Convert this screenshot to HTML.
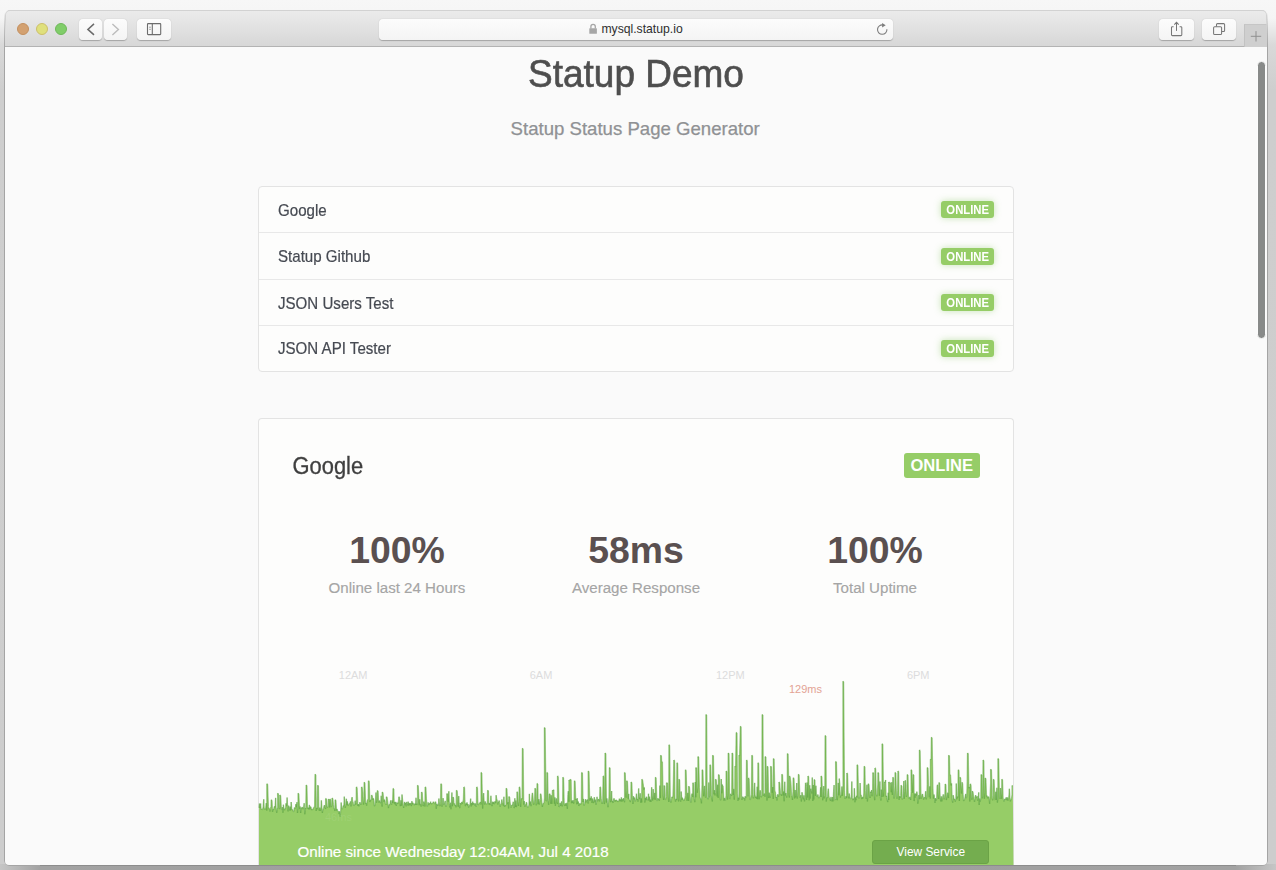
<!DOCTYPE html>
<html><head><meta charset="utf-8">
<style>
*{margin:0;padding:0;box-sizing:border-box}
html,body{width:1276px;height:870px;overflow:hidden}
body{position:relative;font-family:"Liberation Sans",sans-serif;background:#f4f4f4}
.t{position:absolute;white-space:nowrap;line-height:1}
#shadow{position:absolute;left:5px;top:10px;width:1262px;height:855px;border-radius:6px;box-shadow:0 6px 18px rgba(0,0,0,0.45),0 0 1px rgba(0,0,0,0.4)}
#win{position:absolute;left:5px;top:10px;width:1262px;height:855px;border-radius:5px 5px 4px 4px;overflow:hidden;background:#fafafa}
#toolbar{position:absolute;left:0;top:0;width:1262px;height:37px;background:linear-gradient(#ebebeb,#d7d7d7);border-bottom:1px solid #b3b3b3;border-top:1px solid transparent}
.btn{position:absolute;top:8px;height:21px;background:linear-gradient(#fcfcfc,#f4f4f4);border-radius:4px;box-shadow:0 0.5px 1px rgba(0,0,0,0.25)}
.light{position:absolute;top:12px;width:12px;height:12px;border-radius:50%}
#list{position:absolute;left:258px;top:186px;width:756px;height:186px;border:1px solid #e3e3e3;border-radius:4px;background:#fdfdfc}
.row{position:absolute;left:0;width:754px;height:46px;border-top:1px solid #e8e8e8}
.name{position:absolute;left:19px;font-size:15.1px;color:#464a52;-webkit-text-stroke:0.2px #464a52;white-space:nowrap;line-height:1;transform:scaleY(1.1);transform-origin:0 12.8px}
.sb{position:absolute;left:682.2px;width:53px;height:17px;border-radius:3px;background:#96cd67;box-shadow:0 0 7px rgba(120,190,80,0.4);color:#fff;font-weight:bold;font-size:11.3px;line-height:18px;text-align:center}
.sb span{display:inline-block;transform:scaleY(1.1);transform-origin:50% 70%}
#card{position:absolute;left:258px;top:418px;width:756px;height:447px;border:1px solid #e3e3e3;border-bottom:none;border-radius:4px 4px 0 0;background:#fdfdfc;overflow:hidden}
.big{position:absolute;font-weight:bold;font-size:37.4px;color:#5a5050;white-space:nowrap;line-height:1;text-align:center;width:240px}
.lbl{position:absolute;font-size:15.1px;color:#a5a5a5;-webkit-text-stroke:0.15px #a5a5a5;white-space:nowrap;line-height:1;text-align:center;width:240px}
.ax{position:absolute;font-size:11px;color:#dcdcdc;white-space:nowrap;line-height:1}
</style></head><body>
<div style="position:absolute;left:0;top:0;width:1276px;height:870px;background:linear-gradient(#f7f7f7 0px,#f5f5f5 18px,#d9d9d9 45px,#cecece 90px,#cdcdcd 870px)"></div>
<div style="position:absolute;left:0;top:864px;width:1276px;height:6px;background:linear-gradient(90deg,#c6c6c6 0px,#a2a2a2 40px,#9c9c9c 640px,#a2a2a2 1236px,#c6c6c6 1276px)"></div>
<div style="position:absolute;left:4px;top:10px;width:1264px;height:856px;border-radius:6px;background:linear-gradient(rgba(164,164,164,0) 0px,rgba(164,164,164,0.6) 20px,#a4a4a4 40px)"></div>
<div id="win">
  <div id="toolbar">
    <div class="light" style="left:12px;background:#d3a171;border:0.5px solid #c4905f"></div>
    <div class="light" style="left:31px;background:#dfe07c;border:0.5px solid #cdbf6a"></div>
    <div class="light" style="left:50px;background:#80cd69;border:0.5px solid #6fb85a"></div>
    <div class="btn" style="left:74px;width:23px"></div>
    <div class="btn" style="left:99px;width:23px"></div>
    <div class="btn" style="left:132px;width:34px"></div>
    <div class="btn" style="left:373.5px;width:514.5px;"></div>
    <div class="btn" style="left:1154px;width:35px"></div>
    <div class="btn" style="left:1196.5px;width:34.5px"></div>
    <div style="position:absolute;left:1239px;top:13.3px;width:23px;height:22.7px;background:#cfcfcf;border-left:1px solid #c2c2c2;border-top:1px solid #c6c6c6"></div>
  </div>
</div>
<svg style="position:absolute;left:0;top:0" width="1276" height="60" viewBox="0 0 1276 60">
  <path d="M94,23.9 L87.9,29.4 L94,34.9" fill="none" stroke="#6a6a6a" stroke-width="1.5"/>
  <path d="M112.4,23.9 L118.4,29.4 L112.4,34.9" fill="none" stroke="#bcbcbc" stroke-width="1.4"/>
  <rect x="147.5" y="23.6" width="13.2" height="11" fill="none" stroke="#6c6c6c" stroke-width="1.1" rx="0.6"/>
  <line x1="152.3" y1="23.6" x2="152.3" y2="34.6" stroke="#6c6c6c" stroke-width="1.1"/>
  <line x1="149.2" y1="27.2" x2="150.8" y2="27.2" stroke="#8a8a8a" stroke-width="0.9"/>
  <line x1="149.2" y1="29.3" x2="150.8" y2="29.3" stroke="#8a8a8a" stroke-width="0.9"/>
  <rect x="589.3" y="28.2" width="7.6" height="5.6" rx="0.6" fill="#a6a6a6"/>
  <path d="M590.9,28.4 V26.6 A2.2,2.2 0 0 1 595.3,26.6 V28.4" fill="none" stroke="#a6a6a6" stroke-width="1.3"/>
  <path d="M886.9,29.2 A4.7,4.7 0 1 1 883.1,25" fill="none" stroke="#7c7c7c" stroke-width="1.1"/>
  <path d="M882.1,22.9 L885.7,25.2 L882.1,27.5 Z" fill="#7c7c7c"/>
  <path d="M1173.6,26.7 H1172.4 Q1171.5,26.7 1171.5,27.6 V34.7 Q1171.5,35.6 1172.4,35.6 H1180.9 Q1181.8,35.6 1181.8,34.7 V27.6 Q1181.8,26.7 1180.9,26.7 H1179.6" fill="none" stroke="#767676" stroke-width="1.05"/>
  <line x1="1176.5" y1="22.4" x2="1176.5" y2="30.9" stroke="#767676" stroke-width="1.05"/>
  <path d="M1174.3,24.6 L1176.5,22.3 L1178.7,24.6" fill="none" stroke="#767676" stroke-width="1.05"/>
  <rect x="1213.6" y="26.7" width="8" height="7.8" rx="1.1" fill="none" stroke="#767676" stroke-width="1.05"/>
  <path d="M1216.5,26.5 V24.6 Q1216.5,23.6 1217.5,23.6 H1223.6 Q1224.6,23.6 1224.6,24.6 V30.5 Q1224.6,31.5 1223.6,31.5 H1221.9" fill="none" stroke="#767676" stroke-width="1.05"/>
  <line x1="1250.8" y1="36.3" x2="1261.2" y2="36.3" stroke="#8f8f8f" stroke-width="1"/>
  <line x1="1256" y1="31.1" x2="1256" y2="41.5" stroke="#8f8f8f" stroke-width="1"/>
</svg>
<div class="t" style="left:601.4px;top:23px;font-size:12.2px;color:#2e2e2e">mysql.statup.io</div>
<div style="position:absolute;left:1257.2px;top:61.2px;width:8.6px;height:277.6px;border-radius:4.3px;background:#888a89;border:1px solid #fcfcfc"></div>
<div style="position:absolute;left:5px;top:10px;width:1262px;height:24px;border:1px solid #d2d2d2;border-bottom:none;border-radius:5px 5px 0 0;-webkit-mask-image:linear-gradient(#000 40%,transparent)"></div>
<div style="position:absolute;left:40px;top:865px;width:1196px;height:1px;background:#8c8c8c;z-index:0"></div>
<!-- page content in absolute page coords -->
<div class="t" style="left:528px;top:55.6px;font-size:37px;color:#4e4e4e;transform:scaleY(1.06);transform-origin:0 31.3px;-webkit-text-stroke:0.6px #4e4e4e">Statup Demo</div>
<div class="t" style="left:510.6px;top:120.1px;font-size:18.6px;color:#8f9194;-webkit-text-stroke:0.25px #8f9194">Statup Status Page Generator</div>

<div id="list">
  <div class="row" style="top:0;border-top:none"><div class="name" style="top:15.5px">Google</div><div class="sb" style="top:14px"><span>ONLINE</span></div></div>
  <div class="row" style="top:45px"><div class="name" style="top:16px">Statup Github</div><div class="sb" style="top:14.6px"><span>ONLINE</span></div></div>
  <div class="row" style="top:92px"><div class="name" style="top:15.5px">JSON Users Test</div><div class="sb" style="top:14px"><span>ONLINE</span></div></div>
  <div class="row" style="top:138px"><div class="name" style="top:15px">JSON API Tester</div><div class="sb" style="top:14px"><span>ONLINE</span></div></div>
</div>

<div id="card"></div>
<div class="t" style="left:292.5px;top:455.5px;font-size:21.9px;color:#3f3f3f;-webkit-text-stroke:0.3px #3f3f3f;transform:scaleY(1.07);transform-origin:0 18.5px">Google</div>
<div class="abs" style="position:absolute;left:903.6px;top:452.7px;width:76.4px;height:25.2px;border-radius:3px;background:#96cd67;color:#fff;font-weight:bold;font-size:16.6px;line-height:25.2px;text-align:center">ONLINE</div>

<div class="big" style="left:277px;top:532.3px">100%</div>
<div class="big" style="left:516px;top:532.3px">58ms</div>
<div class="big" style="left:755px;top:532.3px">100%</div>
<div class="lbl" style="left:277px;top:579.7px">Online last 24 Hours</div>
<div class="lbl" style="left:516px;top:579.7px">Average Response</div>
<div class="lbl" style="left:755px;top:579.7px">Total Uptime</div>

<div class="ax" style="left:338.8px;top:669.9px">12AM</div>
<div class="ax" style="left:529.7px;top:669.9px">6AM</div>
<div class="ax" style="left:716px;top:669.9px">12PM</div>
<div class="ax" style="left:906.9px;top:669.9px">6PM</div>
<div class="ax" style="left:789px;top:683.6px;color:#e3a394">129ms</div>

<svg style="position:absolute;left:0;top:0" width="1276" height="865" viewBox="0 0 1276 865">
  <path d="M259.0,807.9 L259.5,803.5 L260.0,808.0 L260.6,803.5 L261.1,809.4 L261.6,808.9 L262.1,809.7 L262.6,809.6 L263.2,806.5 L263.7,799.3 L264.2,808.2 L264.7,809.7 L265.2,809.1 L265.8,807.2 L266.3,803.1 L266.8,810.6 L266.8,783.7 L267.6,784.2 L268.4,806.6 L268.9,809.1 L269.4,808.6 L269.9,811.5 L270.4,808.3 L271.0,806.6 L271.2,799.7 L272.0,800.2 L272.5,811.8 L273.0,809.3 L273.6,809.9 L274.1,807.1 L274.6,806.3 L275.1,807.3 L275.6,797.9 L276.2,809.1 L276.7,812.8 L277.2,808.3 L277.7,808.3 L277.6,793.3 L278.4,793.8 L279.3,809.0 L279.8,808.5 L279.8,795.1 L280.6,795.6 L281.4,809.4 L281.9,809.7 L282.4,807.1 L282.9,812.8 L283.4,804.7 L284.0,808.7 L284.5,810.2 L285.0,808.5 L285.5,808.7 L286.0,803.3 L286.6,806.2 L287.1,797.5 L287.6,806.2 L288.1,811.4 L288.6,805.6 L289.2,807.7 L289.7,810.5 L290.2,806.6 L290.7,810.3 L291.2,802.0 L291.8,809.8 L292.3,809.5 L292.8,809.9 L293.3,811.7 L293.8,811.6 L294.4,807.5 L294.9,808.6 L295.4,808.1 L295.9,804.1 L296.4,807.2 L297.0,802.1 L297.5,813.0 L298.0,807.9 L298.0,793.3 L298.8,793.8 L299.6,808.9 L300.1,806.5 L300.6,813.0 L301.1,808.1 L301.6,808.4 L302.2,806.9 L302.7,809.1 L303.2,808.6 L303.7,806.5 L304.2,803.2 L304.8,814.3 L305.3,808.1 L305.8,808.8 L306.1,785.0 L306.9,785.5 L307.4,806.0 L307.9,808.9 L308.4,807.7 L308.9,809.4 L309.4,804.9 L310.0,809.2 L310.5,806.7 L311.0,806.8 L311.5,810.1 L312.0,809.3 L312.6,809.7 L313.1,809.1 L313.6,807.5 L314.1,807.5 L314.6,806.9 L315.0,774.2 L315.8,774.7 L316.2,811.0 L316.7,807.8 L317.2,809.2 L317.6,785.2 L318.4,785.7 L318.8,807.9 L319.3,810.6 L319.8,807.6 L320.4,810.8 L320.9,807.5 L321.4,800.4 L321.9,808.3 L322.4,813.0 L323.0,808.9 L323.5,808.4 L324.0,806.0 L324.5,805.1 L325.0,807.5 L325.6,808.9 L325.6,798.4 L326.4,798.9 L327.1,807.4 L327.6,806.8 L328.2,807.2 L328.4,799.0 L329.2,799.5 L329.7,807.5 L329.8,799.0 L330.6,799.5 L331.3,807.0 L331.8,806.3 L332.0,798.0 L332.8,798.5 L333.4,804.4 L333.9,808.8 L334.4,808.6 L334.9,811.0 L335.1,799.7 L335.9,800.2 L336.5,810.5 L337.0,808.9 L337.5,811.1 L338.0,811.4 L338.6,811.3 L339.1,813.9 L339.6,811.3 L340.1,816.5 L340.6,812.2 L341.2,802.5 L341.7,809.1 L342.2,808.9 L342.7,808.2 L343.2,805.6 L343.8,806.2 L344.3,796.6 L344.8,802.4 L345.3,807.9 L345.8,805.3 L346.4,798.7 L346.9,805.2 L347.4,801.3 L347.9,805.3 L348.4,804.8 L349.0,804.9 L349.5,803.2 L350.0,803.4 L350.5,801.4 L351.0,806.4 L351.6,799.1 L352.1,797.2 L352.6,801.2 L353.1,802.2 L353.6,805.9 L354.2,805.2 L354.7,803.7 L355.2,800.6 L355.7,804.6 L356.2,802.3 L356.3,786.9 L357.1,787.4 L357.8,805.9 L358.3,804.1 L358.8,806.3 L359.4,804.8 L359.9,802.2 L360.4,804.2 L360.9,803.9 L361.4,804.6 L361.5,786.9 L362.2,787.4 L363.0,796.5 L363.5,804.6 L364.0,801.0 L364.1,782.2 L364.9,782.7 L365.6,803.8 L366.1,802.9 L366.6,805.6 L367.2,800.6 L367.7,799.6 L368.2,799.6 L368.4,780.7 L369.2,781.2 L369.8,802.1 L370.3,800.0 L370.8,800.0 L371.3,800.0 L371.5,795.1 L372.2,795.6 L372.9,800.0 L373.4,798.3 L373.9,801.1 L374.4,806.2 L375.0,805.4 L375.5,800.3 L376.0,792.5 L376.5,802.7 L377.0,800.0 L377.3,790.5 L378.1,791.0 L378.6,802.5 L379.1,801.2 L379.6,800.5 L380.2,802.8 L380.7,803.1 L381.2,795.7 L381.7,802.7 L382.2,806.6 L382.2,792.0 L383.0,792.5 L383.8,801.6 L384.3,799.6 L384.8,800.3 L385.4,803.4 L385.9,804.8 L386.4,803.1 L386.3,796.7 L387.1,797.2 L388.0,804.2 L388.5,808.2 L389.0,804.6 L389.5,805.0 L390.0,804.0 L390.6,800.4 L391.1,803.4 L391.6,804.7 L392.1,800.4 L392.6,803.0 L393.0,788.4 L393.8,788.9 L394.2,803.5 L394.7,801.9 L395.2,804.5 L395.8,801.8 L396.3,806.0 L396.8,802.9 L397.3,802.8 L397.8,803.7 L398.4,801.8 L398.8,796.7 L399.5,797.2 L399.9,802.9 L400.4,806.1 L401.0,800.2 L401.5,805.7 L402.0,794.5 L402.5,799.3 L403.0,804.2 L403.6,808.0 L404.1,804.6 L404.6,801.9 L405.1,804.6 L405.6,802.8 L406.2,806.4 L406.7,801.9 L407.2,803.9 L407.7,805.3 L408.2,801.6 L408.8,805.6 L409.3,803.0 L409.8,804.8 L410.3,804.2 L410.8,802.9 L411.4,806.1 L411.9,801.1 L412.4,804.3 L412.9,802.7 L413.4,803.8 L414.0,805.0 L414.5,805.1 L415.0,803.5 L415.5,804.9 L416.0,797.8 L416.6,805.0 L417.1,803.7 L417.6,803.2 L417.5,785.3 L418.2,785.8 L419.2,805.2 L419.7,799.2 L420.2,804.2 L420.7,804.0 L421.2,806.6 L421.5,792.0 L422.2,792.5 L422.8,804.0 L423.3,806.1 L423.8,801.6 L424.4,803.2 L424.9,806.5 L425.1,786.9 L425.9,787.4 L426.4,799.0 L427.0,806.3 L427.5,806.5 L428.0,802.4 L428.5,803.4 L429.0,805.0 L429.6,803.1 L430.1,803.7 L430.6,801.7 L431.1,804.2 L431.6,803.4 L432.2,803.9 L432.7,802.7 L433.2,801.9 L433.7,801.8 L434.2,803.3 L434.8,804.0 L435.3,801.8 L435.8,801.8 L436.3,808.8 L436.8,803.8 L437.4,805.7 L437.9,804.8 L438.4,805.2 L438.9,798.5 L439.4,804.0 L440.0,806.2 L440.5,800.9 L440.8,783.8 L441.6,784.3 L442.0,806.7 L442.6,804.1 L443.1,798.1 L443.6,804.7 L444.1,804.6 L444.6,803.1 L445.2,800.8 L445.7,806.8 L446.2,805.9 L446.7,804.3 L446.8,793.6 L447.6,794.1 L448.3,801.8 L448.8,791.3 L449.3,803.3 L449.8,807.3 L450.4,802.7 L450.9,809.2 L451.4,803.1 L451.9,792.5 L452.4,806.3 L453.0,797.0 L453.5,797.8 L454.0,804.4 L454.5,803.5 L455.0,805.9 L455.6,805.2 L456.1,807.3 L456.4,790.3 L457.2,790.8 L457.6,796.3 L458.2,806.6 L458.7,796.1 L459.2,804.3 L459.7,808.2 L460.2,802.9 L460.8,804.4 L461.3,804.0 L461.8,801.9 L462.3,804.0 L462.8,801.7 L463.4,800.1 L463.8,786.9 L464.5,787.4 L464.9,800.9 L465.4,806.2 L466.0,803.5 L466.5,804.8 L467.0,802.4 L467.5,805.5 L468.0,804.0 L468.6,807.7 L469.1,805.6 L469.6,805.1 L470.1,804.1 L470.6,798.6 L471.2,806.5 L471.7,803.0 L472.2,805.2 L472.7,801.6 L473.2,804.5 L473.8,803.1 L474.3,803.9 L474.8,805.7 L475.3,803.4 L475.8,806.6 L476.4,805.5 L476.6,786.9 L477.4,787.4 L477.9,804.9 L478.4,804.5 L479.0,803.9 L479.5,802.9 L480.0,802.7 L480.5,801.9 L481.0,804.5 L481.0,772.4 L481.8,772.9 L482.6,808.6 L483.1,797.7 L483.6,793.1 L484.2,802.0 L484.7,804.5 L485.2,801.4 L485.7,803.7 L486.2,803.8 L486.8,804.3 L487.3,803.0 L487.6,790.3 L488.4,790.8 L488.8,804.5 L489.4,803.0 L489.9,805.0 L490.4,803.2 L490.9,795.7 L491.4,803.1 L492.0,806.1 L492.5,801.7 L493.0,803.9 L493.5,801.9 L494.0,804.2 L494.6,802.2 L495.1,801.3 L495.6,803.2 L496.1,795.2 L496.6,798.7 L497.2,800.0 L497.7,804.5 L498.2,802.1 L498.7,802.1 L499.2,800.5 L499.8,805.0 L500.3,806.7 L500.8,804.0 L501.3,803.8 L501.8,799.5 L502.4,802.4 L502.9,803.7 L503.4,805.6 L503.9,796.8 L504.4,806.8 L505.0,805.3 L505.5,806.1 L506.0,804.4 L506.1,788.3 L506.9,788.8 L507.6,804.1 L508.1,802.1 L508.6,808.4 L508.8,796.6 L509.6,797.1 L510.2,803.1 L510.7,806.2 L511.2,807.6 L511.7,805.2 L512.2,805.6 L512.8,803.3 L513.3,801.8 L513.8,806.4 L514.3,808.1 L514.8,798.2 L515.4,807.0 L515.9,800.5 L516.4,807.1 L516.9,804.3 L516.9,791.7 L517.6,792.2 L518.5,806.0 L519.0,801.6 L519.2,786.9 L520.0,787.4 L520.6,806.9 L521.1,799.3 L521.6,798.4 L522.1,799.3 L522.4,748.3 L523.1,748.8 L523.7,804.6 L524.2,801.0 L524.7,806.8 L525.2,805.2 L525.8,804.8 L526.3,802.2 L526.8,802.7 L527.3,807.1 L527.8,807.5 L528.4,806.2 L528.9,805.4 L529.4,793.9 L529.9,804.5 L530.4,801.5 L531.0,806.2 L531.5,803.3 L532.0,794.5 L532.5,792.9 L533.0,797.0 L533.6,804.7 L534.1,803.0 L534.6,800.2 L534.9,788.3 L535.6,788.8 L536.2,805.3 L536.7,803.4 L537.0,783.4 L537.8,783.9 L538.2,804.3 L538.8,799.1 L539.3,804.5 L539.8,802.0 L540.3,799.3 L540.4,793.8 L541.1,794.3 L541.9,803.2 L542.4,806.8 L542.9,803.8 L543.4,803.2 L544.0,803.3 L544.5,798.0 L544.4,727.6 L545.1,728.1 L546.0,801.1 L546.6,800.9 L546.9,772.4 L547.6,772.9 L548.1,800.1 L548.6,804.9 L549.2,794.0 L549.5,793.8 L550.2,794.3 L550.7,803.7 L551.2,795.3 L551.8,803.9 L552.3,794.5 L552.4,790.3 L553.1,790.8 L553.8,789.7 L554.4,803.6 L554.9,797.4 L555.4,805.9 L555.9,800.1 L556.4,798.4 L557.0,802.1 L557.5,804.1 L557.5,775.9 L558.2,776.4 L559.0,807.1 L559.6,806.2 L560.1,802.9 L560.6,805.8 L561.1,803.9 L561.6,801.4 L562.2,806.3 L562.7,804.0 L562.8,777.2 L563.5,777.7 L564.2,803.3 L564.8,806.0 L565.3,803.3 L565.8,804.3 L566.3,805.7 L566.8,802.8 L567.4,808.7 L567.9,794.2 L568.4,791.2 L568.9,801.8 L568.9,780.0 L569.6,780.5 L570.4,779.3 L571.1,779.8 L571.5,803.2 L572.0,800.7 L572.6,802.9 L573.1,800.2 L573.6,803.6 L574.1,801.6 L574.4,780.7 L575.1,781.2 L575.7,800.0 L576.2,799.1 L576.7,804.2 L577.2,798.1 L577.8,803.8 L578.3,801.5 L578.8,806.0 L579.3,803.6 L579.8,804.0 L580.4,803.7 L580.9,804.3 L581.4,802.4 L581.6,772.4 L582.4,772.9 L583.0,802.0 L583.5,798.9 L584.0,805.5 L584.5,804.6 L585.0,802.8 L585.6,799.1 L586.1,802.3 L586.6,800.4 L587.1,800.8 L587.6,799.5 L588.2,803.5 L588.2,771.0 L589.0,771.5 L589.7,800.7 L590.2,797.8 L590.8,800.2 L591.3,796.3 L591.8,802.8 L592.3,798.5 L592.8,799.7 L593.4,803.1 L593.9,799.5 L594.4,797.2 L594.9,802.3 L595.4,799.6 L596.0,804.6 L596.5,802.5 L597.0,796.8 L597.5,800.8 L598.0,801.2 L598.6,799.0 L599.1,799.4 L599.6,801.4 L599.9,786.9 L600.6,787.4 L601.2,798.6 L601.7,801.4 L602.2,803.9 L602.7,801.7 L603.1,775.9 L603.9,776.4 L604.3,804.1 L604.8,800.4 L605.0,753.1 L605.8,753.6 L606.4,802.6 L606.9,798.3 L607.4,802.2 L607.9,807.2 L608.4,803.0 L609.0,797.4 L609.4,767.6 L610.1,768.1 L610.5,802.2 L611.0,799.7 L611.6,791.0 L612.1,801.8 L612.6,801.1 L613.1,803.0 L613.6,798.8 L614.2,798.4 L614.7,801.5 L615.2,800.3 L615.7,801.2 L616.2,799.7 L616.8,801.2 L617.3,800.9 L617.8,800.8 L618.3,801.9 L618.8,801.1 L619.4,798.7 L619.9,801.1 L620.4,799.4 L620.9,801.4 L621.4,797.3 L622.0,801.5 L622.5,799.3 L623.0,800.5 L623.5,798.1 L624.0,800.4 L624.6,802.2 L624.5,772.4 L625.2,772.9 L626.1,797.6 L626.6,790.7 L626.6,780.7 L627.4,781.2 L628.2,798.7 L628.7,793.9 L629.2,799.9 L629.8,799.9 L630.3,802.1 L630.8,799.4 L631.0,782.0 L631.8,782.5 L632.4,797.8 L632.9,804.0 L633.4,796.2 L633.9,799.5 L634.4,797.5 L635.0,801.4 L635.5,801.1 L636.0,797.9 L636.5,793.7 L637.0,799.7 L637.6,799.0 L638.1,801.7 L638.6,788.4 L639.1,796.8 L639.6,799.1 L640.2,793.3 L640.7,802.6 L641.2,798.3 L641.7,802.4 L641.8,779.3 L642.5,779.8 L643.3,784.8 L643.8,789.7 L644.3,787.4 L644.8,802.5 L645.4,797.9 L645.9,800.2 L646.4,796.7 L646.9,797.7 L647.4,800.4 L648.0,800.2 L648.5,793.7 L649.0,800.5 L649.5,796.6 L650.0,801.6 L650.6,799.6 L651.1,801.9 L651.6,787.3 L652.1,795.5 L652.6,800.5 L653.2,789.1 L653.7,799.2 L654.2,798.9 L654.7,792.9 L655.2,799.7 L655.4,777.2 L656.1,777.7 L656.8,800.7 L657.3,800.7 L657.8,798.3 L658.4,799.4 L658.9,799.0 L659.4,800.7 L659.9,785.6 L660.4,798.1 L660.6,755.2 L661.4,755.7 L661.6,761.4 L662.4,761.9 L663.0,796.2 L663.6,800.0 L663.9,785.5 L664.6,786.0 L665.1,799.5 L665.6,799.7 L666.2,796.8 L666.5,782.8 L667.2,782.8 L667.6,783.3 L668.2,797.1 L668.8,801.9 L668.9,744.8 L669.6,745.3 L670.3,799.9 L670.8,802.7 L671.4,799.6 L671.9,796.8 L672.4,797.7 L672.9,796.4 L673.4,783.1 L673.8,760.0 L674.5,760.5 L675.0,798.7 L675.5,801.6 L676.0,798.9 L676.6,800.1 L676.9,762.8 L677.6,763.3 L678.1,798.7 L678.6,801.4 L678.9,779.3 L679.6,779.8 L680.2,799.9 L680.7,801.6 L681.2,791.5 L681.8,799.9 L682.3,797.6 L682.8,799.1 L683.3,800.0 L683.8,800.9 L684.4,798.9 L684.9,798.4 L685.4,795.3 L685.4,769.7 L686.1,770.2 L687.0,800.8 L687.5,793.6 L688.0,792.9 L688.5,801.0 L688.6,786.2 L689.4,786.7 L690.1,796.6 L690.6,802.5 L691.1,802.2 L691.6,794.6 L692.2,793.7 L692.7,796.9 L692.8,782.8 L693.5,783.3 L694.2,798.8 L694.8,802.2 L695.3,781.9 L695.8,797.3 L695.8,767.6 L696.5,768.1 L697.4,792.7 L697.9,787.0 L697.9,756.6 L698.6,757.1 L699.4,787.8 L700.0,797.3 L700.5,798.4 L701.0,799.1 L701.5,803.3 L702.0,784.5 L702.1,769.7 L702.9,770.2 L703.6,796.2 L704.1,788.2 L704.6,785.9 L705.2,796.8 L705.7,797.6 L705.9,714.5 L706.6,715.0 L707.2,797.3 L707.8,799.2 L708.3,798.9 L708.8,782.6 L709.3,797.2 L709.8,796.6 L709.9,764.8 L710.6,765.3 L711.4,795.7 L711.9,797.9 L712.4,801.4 L712.6,755.2 L713.4,755.7 L714.0,794.3 L714.5,790.1 L715.0,795.4 L715.6,792.3 L715.5,779.3 L716.2,779.8 L717.1,796.4 L717.6,784.7 L718.2,797.9 L718.5,774.5 L719.2,775.0 L719.7,781.0 L720.2,799.8 L720.8,800.3 L721.3,779.0 L721.8,793.2 L722.3,784.5 L722.4,785.5 L723.1,786.0 L723.9,800.6 L724.4,797.8 L724.9,800.4 L725.4,800.3 L726.0,796.2 L726.1,771.0 L726.9,771.5 L727.5,799.5 L728.0,794.9 L728.2,753.1 L729.0,753.6 L729.6,799.1 L730.1,798.7 L730.6,793.7 L731.2,795.2 L731.7,795.9 L732.0,753.1 L732.8,753.6 L733.2,794.9 L733.8,788.9 L734.3,799.6 L734.8,789.1 L734.9,766.2 L735.6,766.7 L736.2,732.4 L737.0,732.9 L737.4,793.2 L737.9,800.9 L738.4,797.7 L739.0,799.6 L738.9,755.2 L739.6,755.7 L740.4,726.2 L741.1,726.7 L741.6,797.5 L742.1,799.9 L742.6,796.7 L743.1,797.3 L743.6,798.7 L744.2,797.7 L744.7,800.5 L745.2,796.2 L745.7,797.9 L746.2,797.1 L746.5,760.0 L747.2,760.5 L747.8,796.2 L748.3,796.2 L748.4,777.9 L749.1,778.4 L749.9,799.7 L750.4,799.5 L750.9,797.1 L751.4,794.5 L751.8,755.2 L752.5,755.7 L753.0,797.4 L753.5,798.3 L754.0,795.1 L754.6,782.9 L755.1,794.5 L755.6,798.0 L756.1,796.7 L756.6,798.9 L757.2,786.8 L757.7,799.3 L757.9,762.8 L758.6,763.3 L759.2,799.2 L759.8,792.3 L760.3,790.3 L760.8,795.5 L761.3,797.2 L761.8,796.1 L762.1,714.5 L762.9,715.0 L763.4,795.8 L763.9,794.4 L764.4,793.5 L765.0,796.8 L765.1,756.6 L765.9,757.1 L766.5,787.2 L767.0,800.5 L767.2,766.2 L768.0,766.7 L768.6,798.1 L769.1,792.6 L769.6,794.7 L770.2,797.9 L770.7,794.9 L770.6,766.2 L771.4,766.7 L772.2,792.8 L772.8,787.0 L773.3,798.9 L773.4,758.6 L774.1,759.1 L774.8,791.0 L775.4,792.1 L775.9,797.8 L776.4,797.1 L776.9,800.5 L777.4,795.1 L778.0,794.3 L778.5,796.7 L779.0,795.1 L778.9,782.0 L779.6,782.5 L780.6,794.5 L781.1,794.2 L781.6,795.9 L781.8,774.3 L782.5,774.8 L783.2,795.4 L783.7,791.5 L784.2,801.3 L784.7,781.7 L785.2,795.4 L785.8,793.0 L786.3,795.8 L786.8,797.6 L787.3,784.0 L787.4,753.6 L788.1,754.1 L788.9,793.9 L789.4,797.5 L789.4,776.0 L790.1,776.5 L791.0,784.5 L791.5,795.3 L792.0,796.4 L792.5,800.0 L793.0,791.1 L793.2,777.8 L794.0,778.3 L794.6,798.4 L795.1,790.0 L795.6,797.3 L796.2,795.0 L796.7,783.0 L797.2,798.6 L797.7,795.5 L798.2,784.4 L798.4,774.3 L799.1,774.8 L799.8,797.0 L800.3,797.7 L800.8,795.1 L801.4,801.5 L801.9,792.3 L802.4,793.5 L802.9,797.1 L803.4,799.3 L804.0,795.3 L804.5,801.4 L805.0,797.1 L805.5,782.8 L806.0,785.8 L806.6,799.9 L807.1,782.4 L807.6,797.5 L807.9,776.0 L808.6,776.5 L809.2,800.3 L809.7,785.3 L810.2,798.5 L810.7,788.7 L811.2,790.9 L811.8,793.4 L812.3,777.4 L812.8,801.1 L813.3,784.9 L813.8,799.5 L814.1,779.5 L814.9,780.0 L815.4,795.8 L815.9,785.8 L816.4,795.2 L817.0,796.5 L817.5,795.4 L818.0,794.5 L818.5,798.2 L819.0,797.7 L819.6,796.4 L820.1,796.1 L820.6,787.3 L821.1,797.0 L821.0,776.0 L821.8,776.5 L822.7,800.3 L823.2,794.8 L823.7,786.1 L824.2,798.4 L824.8,795.6 L825.1,735.5 L825.9,736.0 L826.3,801.5 L826.8,797.5 L827.4,798.0 L827.9,790.9 L828.4,788.7 L828.9,796.5 L829.4,797.4 L830.0,798.9 L830.5,801.0 L831.0,796.9 L831.5,799.5 L832.0,801.4 L832.6,797.0 L833.1,801.3 L833.6,791.3 L834.1,785.1 L834.6,799.6 L835.2,800.0 L835.7,798.8 L835.6,761.4 L836.4,761.9 L837.2,800.2 L837.8,795.5 L838.3,782.9 L838.8,795.2 L839.3,778.6 L839.8,784.2 L840.4,797.6 L840.9,795.3 L841.4,795.1 L841.9,786.5 L842.4,795.7 L843.0,785.3 L842.9,681.2 L843.6,681.7 L844.5,791.9 L845.0,798.8 L845.6,798.0 L846.1,796.2 L846.6,798.2 L846.8,773.1 L847.5,773.6 L848.2,795.5 L848.7,798.4 L849.2,793.5 L849.7,796.7 L850.2,798.5 L850.8,798.5 L851.3,798.3 L851.8,781.5 L852.3,797.8 L852.8,800.2 L853.4,798.8 L853.9,799.1 L854.4,788.2 L854.9,802.2 L855.4,797.3 L856.0,800.1 L856.5,795.7 L857.0,797.4 L857.0,764.8 L857.8,765.3 L858.6,798.4 L859.1,798.3 L859.6,796.4 L860.1,783.0 L860.6,795.0 L861.2,795.0 L861.7,799.1 L862.2,797.0 L862.7,797.7 L863.2,798.5 L863.8,793.7 L864.1,766.2 L864.9,766.7 L865.3,790.8 L865.8,798.7 L866.4,797.6 L866.9,784.7 L867.4,801.4 L867.9,797.1 L868.2,783.8 L869.0,784.3 L869.5,795.2 L870.0,798.0 L870.5,791.7 L871.0,792.6 L871.6,790.0 L872.1,796.2 L872.6,791.1 L872.8,772.6 L873.5,773.1 L874.2,796.1 L874.7,800.2 L874.9,767.9 L875.6,768.4 L876.2,794.5 L876.8,796.4 L877.3,792.7 L877.8,784.0 L877.9,772.6 L878.6,773.1 L879.4,795.8 L879.9,781.4 L880.4,797.7 L880.9,800.5 L881.4,789.6 L882.0,797.0 L882.0,743.8 L882.8,744.3 L883.5,796.5 L884.0,789.8 L884.4,782.0 L885.1,782.5 L885.6,780.0 L886.1,796.8 L886.6,795.9 L887.2,799.8 L887.7,802.1 L888.2,792.8 L888.7,800.0 L888.6,782.0 L889.4,782.5 L889.9,782.5 L890.6,783.0 L891.3,792.3 L891.8,782.1 L892.4,794.9 L892.8,777.2 L893.5,777.7 L893.9,798.6 L894.4,796.9 L895.0,785.8 L895.0,772.4 L895.8,772.9 L896.5,797.0 L897.0,798.6 L897.6,790.8 L897.9,771.0 L898.6,771.5 L899.1,799.8 L899.6,796.2 L900.2,798.0 L900.7,795.6 L901.0,785.2 L901.8,786.0 L902.2,799.4 L902.8,798.6 L903.3,797.5 L903.8,781.0 L904.3,798.8 L904.8,791.5 L905.4,780.2 L905.9,788.3 L906.4,796.9 L906.9,795.2 L907.2,774.5 L908.0,775.0 L908.5,797.7 L909.0,798.5 L909.5,797.6 L910.0,796.9 L910.6,800.0 L911.1,791.6 L911.0,769.7 L911.8,770.2 L912.6,792.7 L913.0,774.5 L913.8,775.0 L914.2,801.1 L914.7,793.5 L915.2,797.7 L915.8,793.6 L916.3,795.7 L916.8,791.7 L917.3,794.3 L917.8,803.6 L918.4,797.5 L918.9,795.0 L919.4,799.2 L919.4,749.9 L920.1,750.4 L921.0,798.8 L921.5,797.0 L922.0,794.6 L922.5,794.0 L923.0,796.0 L923.6,799.6 L924.1,797.3 L924.6,798.1 L925.1,796.9 L925.6,791.2 L926.2,799.3 L926.7,797.1 L927.2,784.7 L927.2,767.6 L928.0,768.1 L928.8,796.8 L929.3,797.0 L929.8,786.4 L930.3,798.6 L930.4,759.3 L931.1,759.8 L931.4,737.2 L932.1,737.7 L932.9,788.3 L933.4,798.5 L934.0,794.5 L934.5,797.7 L935.0,802.9 L935.5,798.1 L936.0,800.6 L936.6,798.8 L937.1,785.6 L937.6,784.7 L938.1,795.2 L938.6,799.0 L938.9,782.5 L939.6,783.0 L940.2,797.5 L940.7,801.3 L941.2,796.3 L941.8,801.4 L942.3,797.3 L942.8,796.4 L943.3,794.4 L943.8,798.3 L944.4,799.4 L944.9,793.3 L945.1,784.1 L945.9,784.6 L946.4,800.1 L947.0,796.6 L947.5,793.1 L948.0,792.7 L948.5,798.1 L948.6,755.2 L949.4,755.7 L949.8,774.5 L950.5,775.0 L951.1,785.5 L951.6,783.4 L952.2,800.5 L952.7,802.7 L953.2,795.2 L953.7,797.9 L954.2,799.7 L954.8,799.0 L955.3,801.6 L955.8,799.5 L956.3,783.5 L956.8,799.2 L957.4,796.6 L957.9,797.6 L958.2,769.7 L959.0,770.2 L959.4,801.0 L960.0,779.2 L959.9,777.2 L960.6,777.7 L961.5,793.5 L962.0,782.2 L962.6,783.6 L963.1,794.3 L963.6,801.1 L964.1,799.9 L964.6,799.3 L965.2,796.1 L965.7,793.8 L966.2,797.9 L966.7,797.6 L967.2,781.3 L967.5,753.1 L968.2,753.6 L968.8,788.3 L969.3,786.9 L969.8,801.4 L970.2,783.9 L971.0,784.4 L971.4,797.4 L971.9,799.6 L972.4,791.0 L973.0,792.0 L973.5,796.0 L974.0,798.3 L974.5,801.9 L975.0,798.7 L975.6,795.1 L976.1,797.4 L976.6,798.0 L977.1,796.2 L977.6,800.7 L978.2,798.1 L978.7,792.4 L979.2,805.0 L979.7,798.5 L980.2,801.7 L980.8,798.9 L981.0,774.5 L981.8,775.0 L982.3,798.2 L982.8,796.9 L983.0,760.0 L983.8,760.5 L984.4,798.7 L984.9,792.5 L985.1,778.0 L985.9,778.5 L986.5,796.5 L987.0,795.6 L987.5,798.3 L988.0,796.8 L988.6,796.7 L989.1,798.3 L989.6,803.8 L990.1,796.3 L990.6,783.4 L990.6,769.2 L991.4,769.7 L992.2,799.0 L992.7,800.3 L993.2,796.2 L993.4,779.3 L994.1,779.8 L994.8,799.6 L995.3,799.9 L995.8,791.7 L996.4,799.9 L996.9,787.7 L997.4,802.6 L997.9,799.0 L997.9,758.6 L998.6,759.1 L999.5,797.4 L1000.0,798.9 L1000.5,788.0 L1001.0,793.3 L1001.6,798.8 L1001.8,779.3 L1002.5,779.8 L1003.1,798.3 L1003.6,799.9 L1004.2,801.5 L1004.7,798.8 L1005.2,799.8 L1005.7,798.8 L1006.2,797.4 L1006.8,800.1 L1007.3,797.3 L1007.8,800.7 L1008.3,798.7 L1008.8,797.0 L1009.4,788.8 L1009.9,797.4 L1010.4,801.3 L1010.9,799.5 L1011.4,798.9 L1012.0,795.2 L1012.0,785.5 L1012.8,786.0 L1013.5,870 L259.0,870 Z" fill="#96cd67"/>
  <g fill="none" stroke="#5ea541" stroke-width="1.3" stroke-opacity="0.52" stroke-linecap="butt"><path d="M259.0,807.9L259.5,803.5M260.6,803.5L261.1,809.4M262.1,809.7L262.6,809.6M263.7,799.3L264.2,808.2M265.2,809.1L265.8,807.2M266.8,810.6L266.8,783.7M268.4,806.6L268.9,809.1M269.9,811.5L270.4,808.3M271.2,799.7L272.0,800.2M273.0,809.3L273.6,809.9M274.6,806.3L275.1,807.3M276.2,809.1L276.7,812.8M277.7,808.3L277.6,793.3M279.3,809.0L279.8,808.5M280.6,795.6L281.4,809.4M282.4,807.1L282.9,812.8M284.0,808.7L284.5,810.2M285.5,808.7L286.0,803.3M287.1,797.5L287.6,806.2M288.6,805.6L289.2,807.7M290.2,806.6L290.7,810.3M291.8,809.8L292.3,809.5M293.3,811.7L293.8,811.6M294.9,808.6L295.4,808.1M296.4,807.2L297.0,802.1M298.0,807.9L298.0,793.3M299.6,808.9L300.1,806.5M301.1,808.1L301.6,808.4M302.7,809.1L303.2,808.6M304.2,803.2L304.8,814.3M305.8,808.8L306.1,785.0M307.4,806.0L307.9,808.9M308.9,809.4L309.4,804.9M310.5,806.7L311.0,806.8M312.0,809.3L312.6,809.7M313.6,807.5L314.1,807.5M315.0,774.2L315.8,774.7M316.7,807.8L317.2,809.2M318.4,785.7L318.8,807.9M319.8,807.6L320.4,810.8M321.4,800.4L321.9,808.3M323.0,808.9L323.5,808.4M324.5,805.1L325.0,807.5M325.6,798.4L326.4,798.9M327.6,806.8L328.2,807.2M329.2,799.5L329.7,807.5M330.6,799.5L331.3,807.0M332.0,798.0L332.8,798.5M333.9,808.8L334.4,808.6M335.1,799.7L335.9,800.2M337.0,808.9L337.5,811.1M338.6,811.3L339.1,813.9M340.1,816.5L340.6,812.2M341.7,809.1L342.2,808.9M343.2,805.6L343.8,806.2M344.8,802.4L345.3,807.9M346.4,798.7L346.9,805.2M347.9,805.3L348.4,804.8M349.5,803.2L350.0,803.4M351.0,806.4L351.6,799.1M352.6,801.2L353.1,802.2M354.2,805.2L354.7,803.7M355.7,804.6L356.2,802.3M357.1,787.4L357.8,805.9M358.8,806.3L359.4,804.8M360.4,804.2L360.9,803.9M361.5,786.9L362.2,787.4M363.5,804.6L364.0,801.0M364.9,782.7L365.6,803.8M366.6,805.6L367.2,800.6M368.2,799.6L368.4,780.7M369.8,802.1L370.3,800.0M371.3,800.0L371.5,795.1M372.9,800.0L373.4,798.3M374.4,806.2L375.0,805.4M376.0,792.5L376.5,802.7M377.3,790.5L378.1,791.0M379.1,801.2L379.6,800.5M380.7,803.1L381.2,795.7M382.2,806.6L382.2,792.0M383.8,801.6L384.3,799.6M385.4,803.4L385.9,804.8M386.3,796.7L387.1,797.2M388.5,808.2L389.0,804.6M390.0,804.0L390.6,800.4M391.6,804.7L392.1,800.4M393.0,788.4L393.8,788.9M394.7,801.9L395.2,804.5M396.3,806.0L396.8,802.9M397.8,803.7L398.4,801.8M399.5,797.2L399.9,802.9M401.0,800.2L401.5,805.7M402.5,799.3L403.0,804.2M404.1,804.6L404.6,801.9M405.6,802.8L406.2,806.4M407.2,803.9L407.7,805.3M408.8,805.6L409.3,803.0M410.3,804.2L410.8,802.9M411.9,801.1L412.4,804.3M413.4,803.8L414.0,805.0M415.0,803.5L415.5,804.9M416.6,805.0L417.1,803.7M417.5,785.3L418.2,785.8M419.7,799.2L420.2,804.2M421.2,806.6L421.5,792.0M422.8,804.0L423.3,806.1M424.4,803.2L424.9,806.5M425.9,787.4L426.4,799.0M427.5,806.5L428.0,802.4M429.0,805.0L429.6,803.1M430.6,801.7L431.1,804.2M432.2,803.9L432.7,802.7M433.7,801.8L434.2,803.3M435.3,801.8L435.8,801.8M436.8,803.8L437.4,805.7M438.4,805.2L438.9,798.5M440.0,806.2L440.5,800.9M441.6,784.3L442.0,806.7M443.1,798.1L443.6,804.7M444.6,803.1L445.2,800.8M446.2,805.9L446.7,804.3M447.6,794.1L448.3,801.8M449.3,803.3L449.8,807.3M450.9,809.2L451.4,803.1M452.4,806.3L453.0,797.0M454.0,804.4L454.5,803.5M455.6,805.2L456.1,807.3M457.2,790.8L457.6,796.3M458.7,796.1L459.2,804.3M460.2,802.9L460.8,804.4M461.8,801.9L462.3,804.0M463.4,800.1L463.8,786.9M464.9,800.9L465.4,806.2M466.5,804.8L467.0,802.4M468.0,804.0L468.6,807.7M469.6,805.1L470.1,804.1M471.2,806.5L471.7,803.0M472.7,801.6L473.2,804.5M474.3,803.9L474.8,805.7M475.8,806.6L476.4,805.5M477.4,787.4L477.9,804.9M479.0,803.9L479.5,802.9M480.5,801.9L481.0,804.5M481.8,772.9L482.6,808.6M483.6,793.1L484.2,802.0M485.2,801.4L485.7,803.7M486.8,804.3L487.3,803.0M488.4,790.8L488.8,804.5M489.9,805.0L490.4,803.2M491.4,803.1L492.0,806.1M493.0,803.9L493.5,801.9M494.6,802.2L495.1,801.3M496.1,795.2L496.6,798.7M497.7,804.5L498.2,802.1M499.2,800.5L499.8,805.0M500.8,804.0L501.3,803.8M502.4,802.4L502.9,803.7M503.9,796.8L504.4,806.8M505.5,806.1L506.0,804.4M506.9,788.8L507.6,804.1M508.6,808.4L508.8,796.6M510.2,803.1L510.7,806.2M511.7,805.2L512.2,805.6M513.3,801.8L513.8,806.4M514.8,798.2L515.4,807.0M516.4,807.1L516.9,804.3M517.6,792.2L518.5,806.0M519.2,786.9L520.0,787.4M521.1,799.3L521.6,798.4M522.4,748.3L523.1,748.8M524.2,801.0L524.7,806.8M525.8,804.8L526.3,802.2M527.3,807.1L527.8,807.5M528.9,805.4L529.4,793.9M530.4,801.5L531.0,806.2M532.0,794.5L532.5,792.9M533.6,804.7L534.1,803.0M534.9,788.3L535.6,788.8M536.7,803.4L537.0,783.4M538.2,804.3L538.8,799.1M539.8,802.0L540.3,799.3M541.1,794.3L541.9,803.2M542.9,803.8L543.4,803.2M544.5,798.0L544.4,727.6M546.0,801.1L546.6,800.9M547.6,772.9L548.1,800.1M549.2,794.0L549.5,793.8M550.7,803.7L551.2,795.3M552.3,794.5L552.4,790.3M553.8,789.7L554.4,803.6M555.4,805.9L555.9,800.1M557.0,802.1L557.5,804.1M558.2,776.4L559.0,807.1M560.1,802.9L560.6,805.8M561.6,801.4L562.2,806.3M562.8,777.2L563.5,777.7M564.8,806.0L565.3,803.3M566.3,805.7L566.8,802.8M567.9,794.2L568.4,791.2M568.9,780.0L569.6,780.5M571.1,779.8L571.5,803.2M572.6,802.9L573.1,800.2M574.1,801.6L574.4,780.7M575.7,800.0L576.2,799.1M577.2,798.1L577.8,803.8M578.8,806.0L579.3,803.6M580.4,803.7L580.9,804.3M581.6,772.4L582.4,772.9M583.5,798.9L584.0,805.5M585.0,802.8L585.6,799.1M586.6,800.4L587.1,800.8M588.2,803.5L588.2,771.0M589.7,800.7L590.2,797.8M591.3,796.3L591.8,802.8M592.8,799.7L593.4,803.1M594.4,797.2L594.9,802.3M596.0,804.6L596.5,802.5M597.5,800.8L598.0,801.2M599.1,799.4L599.6,801.4M600.6,787.4L601.2,798.6M602.2,803.9L602.7,801.7M603.9,776.4L604.3,804.1M605.0,753.1L605.8,753.6M606.9,798.3L607.4,802.2M608.4,803.0L609.0,797.4M610.1,768.1L610.5,802.2M611.6,791.0L612.1,801.8M613.1,803.0L613.6,798.8M614.7,801.5L615.2,800.3M616.2,799.7L616.8,801.2M617.8,800.8L618.3,801.9M619.4,798.7L619.9,801.1M620.9,801.4L621.4,797.3M622.5,799.3L623.0,800.5M624.0,800.4L624.6,802.2M625.2,772.9L626.1,797.6M626.6,780.7L627.4,781.2M628.7,793.9L629.2,799.9M630.3,802.1L630.8,799.4M631.8,782.5L632.4,797.8M633.4,796.2L633.9,799.5M635.0,801.4L635.5,801.1M636.5,793.7L637.0,799.7M638.1,801.7L638.6,788.4M639.6,799.1L640.2,793.3M641.2,798.3L641.7,802.4M642.5,779.8L643.3,784.8M644.3,787.4L644.8,802.5M645.9,800.2L646.4,796.7M647.4,800.4L648.0,800.2M649.0,800.5L649.5,796.6M650.6,799.6L651.1,801.9M652.1,795.5L652.6,800.5M653.7,799.2L654.2,798.9M655.2,799.7L655.4,777.2M656.8,800.7L657.3,800.7M658.4,799.4L658.9,799.0M659.9,785.6L660.4,798.1M661.4,755.7L661.6,761.4M663.0,796.2L663.6,800.0M664.6,786.0L665.1,799.5M666.2,796.8L666.5,782.8M667.6,783.3L668.2,797.1M668.9,744.8L669.6,745.3M670.8,802.7L671.4,799.6M672.4,797.7L672.9,796.4M673.8,760.0L674.5,760.5M675.5,801.6L676.0,798.9M676.9,762.8L677.6,763.3M678.6,801.4L678.9,779.3M680.2,799.9L680.7,801.6M681.8,799.9L682.3,797.6M683.3,800.0L683.8,800.9M684.9,798.4L685.4,795.3M686.1,770.2L687.0,800.8M688.0,792.9L688.5,801.0M689.4,786.7L690.1,796.6M691.1,802.2L691.6,794.6M692.7,796.9L692.8,782.8M694.2,798.8L694.8,802.2M695.8,797.3L695.8,767.6M697.4,792.7L697.9,787.0M698.6,757.1L699.4,787.8M700.5,798.4L701.0,799.1M702.0,784.5L702.1,769.7M703.6,796.2L704.1,788.2M705.2,796.8L705.7,797.6M706.6,715.0L707.2,797.3M708.3,798.9L708.8,782.6M709.8,796.6L709.9,764.8M711.4,795.7L711.9,797.9M712.6,755.2L713.4,755.7M714.5,790.1L715.0,795.4M715.5,779.3L716.2,779.8M717.6,784.7L718.2,797.9M719.2,775.0L719.7,781.0M720.8,800.3L721.3,779.0M722.3,784.5L722.4,785.5M723.9,800.6L724.4,797.8M725.4,800.3L726.0,796.2M726.9,771.5L727.5,799.5M728.2,753.1L729.0,753.6M730.1,798.7L730.6,793.7M731.7,795.9L732.0,753.1M733.2,794.9L733.8,788.9M734.8,789.1L734.9,766.2M736.2,732.4L737.0,732.9M737.9,800.9L738.4,797.7M738.9,755.2L739.6,755.7M741.1,726.7L741.6,797.5M742.6,796.7L743.1,797.3M744.2,797.7L744.7,800.5M745.7,797.9L746.2,797.1M747.2,760.5L747.8,796.2M748.4,777.9L749.1,778.4M750.4,799.5L750.9,797.1M751.8,755.2L752.5,755.7M753.5,798.3L754.0,795.1M755.1,794.5L755.6,798.0M756.6,798.9L757.2,786.8M757.9,762.8L758.6,763.3M759.8,792.3L760.3,790.3M761.3,797.2L761.8,796.1M762.9,715.0L763.4,795.8M764.4,793.5L765.0,796.8M765.9,757.1L766.5,787.2M767.2,766.2L768.0,766.7M769.1,792.6L769.6,794.7M770.7,794.9L770.6,766.2M772.2,792.8L772.8,787.0M773.4,758.6L774.1,759.1M775.4,792.1L775.9,797.8M776.9,800.5L777.4,795.1M778.5,796.7L779.0,795.1M779.6,782.5L780.6,794.5M781.6,795.9L781.8,774.3M783.2,795.4L783.7,791.5M784.7,781.7L785.2,795.4M786.3,795.8L786.8,797.6M787.4,753.6L788.1,754.1M789.4,797.5L789.4,776.0M791.0,784.5L791.5,795.3M792.5,800.0L793.0,791.1M794.0,778.3L794.6,798.4M795.6,797.3L796.2,795.0M797.2,798.6L797.7,795.5M798.4,774.3L799.1,774.8M800.3,797.7L800.8,795.1M801.9,792.3L802.4,793.5M803.4,799.3L804.0,795.3M805.0,797.1L805.5,782.8M806.6,799.9L807.1,782.4M807.9,776.0L808.6,776.5M809.7,785.3L810.2,798.5M811.2,790.9L811.8,793.4M812.8,801.1L813.3,784.9M814.1,779.5L814.9,780.0M815.9,785.8L816.4,795.2M817.5,795.4L818.0,794.5M819.0,797.7L819.6,796.4M820.6,787.3L821.1,797.0M821.8,776.5L822.7,800.3M823.7,786.1L824.2,798.4M825.1,735.5L825.9,736.0M826.8,797.5L827.4,798.0M828.4,788.7L828.9,796.5M830.0,798.9L830.5,801.0M831.5,799.5L832.0,801.4M833.1,801.3L833.6,791.3M834.6,799.6L835.2,800.0M835.6,761.4L836.4,761.9M837.8,795.5L838.3,782.9M839.3,778.6L839.8,784.2M840.9,795.3L841.4,795.1M842.4,795.7L843.0,785.3M843.6,681.7L844.5,791.9M845.6,798.0L846.1,796.2M846.8,773.1L847.5,773.6M848.7,798.4L849.2,793.5M850.2,798.5L850.8,798.5M851.8,781.5L852.3,797.8M853.4,798.8L853.9,799.1M854.9,802.2L855.4,797.3M856.5,795.7L857.0,797.4M857.8,765.3L858.6,798.4M859.6,796.4L860.1,783.0M861.2,795.0L861.7,799.1M862.7,797.7L863.2,798.5M864.1,766.2L864.9,766.7M865.8,798.7L866.4,797.6M867.4,801.4L867.9,797.1M869.0,784.3L869.5,795.2M870.5,791.7L871.0,792.6M872.1,796.2L872.6,791.1M873.5,773.1L874.2,796.1M874.9,767.9L875.6,768.4M876.8,796.4L877.3,792.7M877.9,772.6L878.6,773.1M879.9,781.4L880.4,797.7M881.4,789.6L882.0,797.0M882.8,744.3L883.5,796.5M884.4,782.0L885.1,782.5M886.1,796.8L886.6,795.9M887.7,802.1L888.2,792.8M888.6,782.0L889.4,782.5M890.6,783.0L891.3,792.3M892.4,794.9L892.8,777.2M893.9,798.6L894.4,796.9M895.0,772.4L895.8,772.9M897.0,798.6L897.6,790.8M898.6,771.5L899.1,799.8M900.2,798.0L900.7,795.6M901.8,786.0L902.2,799.4M903.3,797.5L903.8,781.0M904.8,791.5L905.4,780.2M906.4,796.9L906.9,795.2M908.0,775.0L908.5,797.7M909.5,797.6L910.0,796.9M911.1,791.6L911.0,769.7M912.6,792.7L913.0,774.5M914.2,801.1L914.7,793.5M915.8,793.6L916.3,795.7M917.3,794.3L917.8,803.6M918.9,795.0L919.4,799.2M920.1,750.4L921.0,798.8M922.0,794.6L922.5,794.0M923.6,799.6L924.1,797.3M925.1,796.9L925.6,791.2M926.7,797.1L927.2,784.7M928.0,768.1L928.8,796.8M929.8,786.4L930.3,798.6M931.1,759.8L931.4,737.2M932.9,788.3L933.4,798.5M934.5,797.7L935.0,802.9M936.0,800.6L936.6,798.8M937.6,784.7L938.1,795.2M938.9,782.5L939.6,783.0M940.7,801.3L941.2,796.3M942.3,797.3L942.8,796.4M943.8,798.3L944.4,799.4M945.1,784.1L945.9,784.6M947.0,796.6L947.5,793.1M948.5,798.1L948.6,755.2M949.8,774.5L950.5,775.0M951.6,783.4L952.2,800.5M953.2,795.2L953.7,797.9M954.8,799.0L955.3,801.6M956.3,783.5L956.8,799.2M957.9,797.6L958.2,769.7M959.4,801.0L960.0,779.2M960.6,777.7L961.5,793.5M962.6,783.6L963.1,794.3M964.1,799.9L964.6,799.3M965.7,793.8L966.2,797.9M967.2,781.3L967.5,753.1M968.8,788.3L969.3,786.9M970.2,783.9L971.0,784.4M971.9,799.6L972.4,791.0M973.5,796.0L974.0,798.3M975.0,798.7L975.6,795.1M976.6,798.0L977.1,796.2M978.2,798.1L978.7,792.4M979.7,798.5L980.2,801.7M981.0,774.5L981.8,775.0M982.8,796.9L983.0,760.0M984.4,798.7L984.9,792.5M985.9,778.5L986.5,796.5M987.5,798.3L988.0,796.8M989.1,798.3L989.6,803.8M990.6,783.4L990.6,769.2M992.2,799.0L992.7,800.3M993.4,779.3L994.1,779.8M995.3,799.9L995.8,791.7M996.9,787.7L997.4,802.6M997.9,758.6L998.6,759.1M1000.0,798.9L1000.5,788.0M1001.6,798.8L1001.8,779.3M1003.1,798.3L1003.6,799.9M1004.7,798.8L1005.2,799.8M1006.2,797.4L1006.8,800.1M1007.8,800.7L1008.3,798.7M1009.4,788.8L1009.9,797.4M1010.9,799.5L1011.4,798.9M1012.0,785.5L1012.8,786.0"/><path d="M259.5,803.5L260.0,808.0M261.1,809.4L261.6,808.9M262.6,809.6L263.2,806.5M264.2,808.2L264.7,809.7M265.8,807.2L266.3,803.1M266.8,783.7L267.6,784.2M268.9,809.1L269.4,808.6M270.4,808.3L271.0,806.6M272.0,800.2L272.5,811.8M273.6,809.9L274.1,807.1M275.1,807.3L275.6,797.9M276.7,812.8L277.2,808.3M277.6,793.3L278.4,793.8M279.8,808.5L279.8,795.1M281.4,809.4L281.9,809.7M282.9,812.8L283.4,804.7M284.5,810.2L285.0,808.5M286.0,803.3L286.6,806.2M287.6,806.2L288.1,811.4M289.2,807.7L289.7,810.5M290.7,810.3L291.2,802.0M292.3,809.5L292.8,809.9M293.8,811.6L294.4,807.5M295.4,808.1L295.9,804.1M297.0,802.1L297.5,813.0M298.0,793.3L298.8,793.8M300.1,806.5L300.6,813.0M301.6,808.4L302.2,806.9M303.2,808.6L303.7,806.5M304.8,814.3L305.3,808.1M306.1,785.0L306.9,785.5M307.9,808.9L308.4,807.7M309.4,804.9L310.0,809.2M311.0,806.8L311.5,810.1M312.6,809.7L313.1,809.1M314.1,807.5L314.6,806.9M315.8,774.7L316.2,811.0M317.2,809.2L317.6,785.2M318.8,807.9L319.3,810.6M320.4,810.8L320.9,807.5M321.9,808.3L322.4,813.0M323.5,808.4L324.0,806.0M325.0,807.5L325.6,808.9M326.4,798.9L327.1,807.4M328.2,807.2L328.4,799.0M329.7,807.5L329.8,799.0M331.3,807.0L331.8,806.3M332.8,798.5L333.4,804.4M334.4,808.6L334.9,811.0M335.9,800.2L336.5,810.5M337.5,811.1L338.0,811.4M339.1,813.9L339.6,811.3M340.6,812.2L341.2,802.5M342.2,808.9L342.7,808.2M343.8,806.2L344.3,796.6M345.3,807.9L345.8,805.3M346.9,805.2L347.4,801.3M348.4,804.8L349.0,804.9M350.0,803.4L350.5,801.4M351.6,799.1L352.1,797.2M353.1,802.2L353.6,805.9M354.7,803.7L355.2,800.6M356.2,802.3L356.3,786.9M357.8,805.9L358.3,804.1M359.4,804.8L359.9,802.2M360.9,803.9L361.4,804.6M362.2,787.4L363.0,796.5M364.0,801.0L364.1,782.2M365.6,803.8L366.1,802.9M367.2,800.6L367.7,799.6M368.4,780.7L369.2,781.2M370.3,800.0L370.8,800.0M371.5,795.1L372.2,795.6M373.4,798.3L373.9,801.1M375.0,805.4L375.5,800.3M376.5,802.7L377.0,800.0M378.1,791.0L378.6,802.5M379.6,800.5L380.2,802.8M381.2,795.7L381.7,802.7M382.2,792.0L383.0,792.5M384.3,799.6L384.8,800.3M385.9,804.8L386.4,803.1M387.1,797.2L388.0,804.2M389.0,804.6L389.5,805.0M390.6,800.4L391.1,803.4M392.1,800.4L392.6,803.0M393.8,788.9L394.2,803.5M395.2,804.5L395.8,801.8M396.8,802.9L397.3,802.8M398.4,801.8L398.8,796.7M399.9,802.9L400.4,806.1M401.5,805.7L402.0,794.5M403.0,804.2L403.6,808.0M404.6,801.9L405.1,804.6M406.2,806.4L406.7,801.9M407.7,805.3L408.2,801.6M409.3,803.0L409.8,804.8M410.8,802.9L411.4,806.1M412.4,804.3L412.9,802.7M414.0,805.0L414.5,805.1M415.5,804.9L416.0,797.8M417.1,803.7L417.6,803.2M418.2,785.8L419.2,805.2M420.2,804.2L420.7,804.0M421.5,792.0L422.2,792.5M423.3,806.1L423.8,801.6M424.9,806.5L425.1,786.9M426.4,799.0L427.0,806.3M428.0,802.4L428.5,803.4M429.6,803.1L430.1,803.7M431.1,804.2L431.6,803.4M432.7,802.7L433.2,801.9M434.2,803.3L434.8,804.0M435.8,801.8L436.3,808.8M437.4,805.7L437.9,804.8M438.9,798.5L439.4,804.0M440.5,800.9L440.8,783.8M442.0,806.7L442.6,804.1M443.6,804.7L444.1,804.6M445.2,800.8L445.7,806.8M446.7,804.3L446.8,793.6M448.3,801.8L448.8,791.3M449.8,807.3L450.4,802.7M451.4,803.1L451.9,792.5M453.0,797.0L453.5,797.8M454.5,803.5L455.0,805.9M456.1,807.3L456.4,790.3M457.6,796.3L458.2,806.6M459.2,804.3L459.7,808.2M460.8,804.4L461.3,804.0M462.3,804.0L462.8,801.7M463.8,786.9L464.5,787.4M465.4,806.2L466.0,803.5M467.0,802.4L467.5,805.5M468.6,807.7L469.1,805.6M470.1,804.1L470.6,798.6M471.7,803.0L472.2,805.2M473.2,804.5L473.8,803.1M474.8,805.7L475.3,803.4M476.4,805.5L476.6,786.9M477.9,804.9L478.4,804.5M479.5,802.9L480.0,802.7M481.0,804.5L481.0,772.4M482.6,808.6L483.1,797.7M484.2,802.0L484.7,804.5M485.7,803.7L486.2,803.8M487.3,803.0L487.6,790.3M488.8,804.5L489.4,803.0M490.4,803.2L490.9,795.7M492.0,806.1L492.5,801.7M493.5,801.9L494.0,804.2M495.1,801.3L495.6,803.2M496.6,798.7L497.2,800.0M498.2,802.1L498.7,802.1M499.8,805.0L500.3,806.7M501.3,803.8L501.8,799.5M502.9,803.7L503.4,805.6M504.4,806.8L505.0,805.3M506.0,804.4L506.1,788.3M507.6,804.1L508.1,802.1M508.8,796.6L509.6,797.1M510.7,806.2L511.2,807.6M512.2,805.6L512.8,803.3M513.8,806.4L514.3,808.1M515.4,807.0L515.9,800.5M516.9,804.3L516.9,791.7M518.5,806.0L519.0,801.6M520.0,787.4L520.6,806.9M521.6,798.4L522.1,799.3M523.1,748.8L523.7,804.6M524.7,806.8L525.2,805.2M526.3,802.2L526.8,802.7M527.8,807.5L528.4,806.2M529.4,793.9L529.9,804.5M531.0,806.2L531.5,803.3M532.5,792.9L533.0,797.0M534.1,803.0L534.6,800.2M535.6,788.8L536.2,805.3M537.0,783.4L537.8,783.9M538.8,799.1L539.3,804.5M540.3,799.3L540.4,793.8M541.9,803.2L542.4,806.8M543.4,803.2L544.0,803.3M544.4,727.6L545.1,728.1M546.6,800.9L546.9,772.4M548.1,800.1L548.6,804.9M549.5,793.8L550.2,794.3M551.2,795.3L551.8,803.9M552.4,790.3L553.1,790.8M554.4,803.6L554.9,797.4M555.9,800.1L556.4,798.4M557.5,804.1L557.5,775.9M559.0,807.1L559.6,806.2M560.6,805.8L561.1,803.9M562.2,806.3L562.7,804.0M563.5,777.7L564.2,803.3M565.3,803.3L565.8,804.3M566.8,802.8L567.4,808.7M568.4,791.2L568.9,801.8M569.6,780.5L570.4,779.3M571.5,803.2L572.0,800.7M573.1,800.2L573.6,803.6M574.4,780.7L575.1,781.2M576.2,799.1L576.7,804.2M577.8,803.8L578.3,801.5M579.3,803.6L579.8,804.0M580.9,804.3L581.4,802.4M582.4,772.9L583.0,802.0M584.0,805.5L584.5,804.6M585.6,799.1L586.1,802.3M587.1,800.8L587.6,799.5M588.2,771.0L589.0,771.5M590.2,797.8L590.8,800.2M591.8,802.8L592.3,798.5M593.4,803.1L593.9,799.5M594.9,802.3L595.4,799.6M596.5,802.5L597.0,796.8M598.0,801.2L598.6,799.0M599.6,801.4L599.9,786.9M601.2,798.6L601.7,801.4M602.7,801.7L603.1,775.9M604.3,804.1L604.8,800.4M605.8,753.6L606.4,802.6M607.4,802.2L607.9,807.2M609.0,797.4L609.4,767.6M610.5,802.2L611.0,799.7M612.1,801.8L612.6,801.1M613.6,798.8L614.2,798.4M615.2,800.3L615.7,801.2M616.8,801.2L617.3,800.9M618.3,801.9L618.8,801.1M619.9,801.1L620.4,799.4M621.4,797.3L622.0,801.5M623.0,800.5L623.5,798.1M624.6,802.2L624.5,772.4M626.1,797.6L626.6,790.7M627.4,781.2L628.2,798.7M629.2,799.9L629.8,799.9M630.8,799.4L631.0,782.0M632.4,797.8L632.9,804.0M633.9,799.5L634.4,797.5M635.5,801.1L636.0,797.9M637.0,799.7L637.6,799.0M638.6,788.4L639.1,796.8M640.2,793.3L640.7,802.6M641.7,802.4L641.8,779.3M643.3,784.8L643.8,789.7M644.8,802.5L645.4,797.9M646.4,796.7L646.9,797.7M648.0,800.2L648.5,793.7M649.5,796.6L650.0,801.6M651.1,801.9L651.6,787.3M652.6,800.5L653.2,789.1M654.2,798.9L654.7,792.9M655.4,777.2L656.1,777.7M657.3,800.7L657.8,798.3M658.9,799.0L659.4,800.7M660.4,798.1L660.6,755.2M661.6,761.4L662.4,761.9M663.6,800.0L663.9,785.5M665.1,799.5L665.6,799.7M666.5,782.8L667.2,782.8M668.2,797.1L668.8,801.9M669.6,745.3L670.3,799.9M671.4,799.6L671.9,796.8M672.9,796.4L673.4,783.1M674.5,760.5L675.0,798.7M676.0,798.9L676.6,800.1M677.6,763.3L678.1,798.7M678.9,779.3L679.6,779.8M680.7,801.6L681.2,791.5M682.3,797.6L682.8,799.1M683.8,800.9L684.4,798.9M685.4,795.3L685.4,769.7M687.0,800.8L687.5,793.6M688.5,801.0L688.6,786.2M690.1,796.6L690.6,802.5M691.6,794.6L692.2,793.7M692.8,782.8L693.5,783.3M694.8,802.2L695.3,781.9M695.8,767.6L696.5,768.1M697.9,787.0L697.9,756.6M699.4,787.8L700.0,797.3M701.0,799.1L701.5,803.3M702.1,769.7L702.9,770.2M704.1,788.2L704.6,785.9M705.7,797.6L705.9,714.5M707.2,797.3L707.8,799.2M708.8,782.6L709.3,797.2M709.9,764.8L710.6,765.3M711.9,797.9L712.4,801.4M713.4,755.7L714.0,794.3M715.0,795.4L715.6,792.3M716.2,779.8L717.1,796.4M718.2,797.9L718.5,774.5M719.7,781.0L720.2,799.8M721.3,779.0L721.8,793.2M722.4,785.5L723.1,786.0M724.4,797.8L724.9,800.4M726.0,796.2L726.1,771.0M727.5,799.5L728.0,794.9M729.0,753.6L729.6,799.1M730.6,793.7L731.2,795.2M732.0,753.1L732.8,753.6M733.8,788.9L734.3,799.6M734.9,766.2L735.6,766.7M737.0,732.9L737.4,793.2M738.4,797.7L739.0,799.6M739.6,755.7L740.4,726.2M741.6,797.5L742.1,799.9M743.1,797.3L743.6,798.7M744.7,800.5L745.2,796.2M746.2,797.1L746.5,760.0M747.8,796.2L748.3,796.2M749.1,778.4L749.9,799.7M750.9,797.1L751.4,794.5M752.5,755.7L753.0,797.4M754.0,795.1L754.6,782.9M755.6,798.0L756.1,796.7M757.2,786.8L757.7,799.3M758.6,763.3L759.2,799.2M760.3,790.3L760.8,795.5M761.8,796.1L762.1,714.5M763.4,795.8L763.9,794.4M765.0,796.8L765.1,756.6M766.5,787.2L767.0,800.5M768.0,766.7L768.6,798.1M769.6,794.7L770.2,797.9M770.6,766.2L771.4,766.7M772.8,787.0L773.3,798.9M774.1,759.1L774.8,791.0M775.9,797.8L776.4,797.1M777.4,795.1L778.0,794.3M779.0,795.1L778.9,782.0M780.6,794.5L781.1,794.2M781.8,774.3L782.5,774.8M783.7,791.5L784.2,801.3M785.2,795.4L785.8,793.0M786.8,797.6L787.3,784.0M788.1,754.1L788.9,793.9M789.4,776.0L790.1,776.5M791.5,795.3L792.0,796.4M793.0,791.1L793.2,777.8M794.6,798.4L795.1,790.0M796.2,795.0L796.7,783.0M797.7,795.5L798.2,784.4M799.1,774.8L799.8,797.0M800.8,795.1L801.4,801.5M802.4,793.5L802.9,797.1M804.0,795.3L804.5,801.4M805.5,782.8L806.0,785.8M807.1,782.4L807.6,797.5M808.6,776.5L809.2,800.3M810.2,798.5L810.7,788.7M811.8,793.4L812.3,777.4M813.3,784.9L813.8,799.5M814.9,780.0L815.4,795.8M816.4,795.2L817.0,796.5M818.0,794.5L818.5,798.2M819.6,796.4L820.1,796.1M821.1,797.0L821.0,776.0M822.7,800.3L823.2,794.8M824.2,798.4L824.8,795.6M825.9,736.0L826.3,801.5M827.4,798.0L827.9,790.9M828.9,796.5L829.4,797.4M830.5,801.0L831.0,796.9M832.0,801.4L832.6,797.0M833.6,791.3L834.1,785.1M835.2,800.0L835.7,798.8M836.4,761.9L837.2,800.2M838.3,782.9L838.8,795.2M839.8,784.2L840.4,797.6M841.4,795.1L841.9,786.5M843.0,785.3L842.9,681.2M844.5,791.9L845.0,798.8M846.1,796.2L846.6,798.2M847.5,773.6L848.2,795.5M849.2,793.5L849.7,796.7M850.8,798.5L851.3,798.3M852.3,797.8L852.8,800.2M853.9,799.1L854.4,788.2M855.4,797.3L856.0,800.1M857.0,797.4L857.0,764.8M858.6,798.4L859.1,798.3M860.1,783.0L860.6,795.0M861.7,799.1L862.2,797.0M863.2,798.5L863.8,793.7M864.9,766.7L865.3,790.8M866.4,797.6L866.9,784.7M867.9,797.1L868.2,783.8M869.5,795.2L870.0,798.0M871.0,792.6L871.6,790.0M872.6,791.1L872.8,772.6M874.2,796.1L874.7,800.2M875.6,768.4L876.2,794.5M877.3,792.7L877.8,784.0M878.6,773.1L879.4,795.8M880.4,797.7L880.9,800.5M882.0,797.0L882.0,743.8M883.5,796.5L884.0,789.8M885.1,782.5L885.6,780.0M886.6,795.9L887.2,799.8M888.2,792.8L888.7,800.0M889.4,782.5L889.9,782.5M891.3,792.3L891.8,782.1M892.8,777.2L893.5,777.7M894.4,796.9L895.0,785.8M895.8,772.9L896.5,797.0M897.6,790.8L897.9,771.0M899.1,799.8L899.6,796.2M900.7,795.6L901.0,785.2M902.2,799.4L902.8,798.6M903.8,781.0L904.3,798.8M905.4,780.2L905.9,788.3M906.9,795.2L907.2,774.5M908.5,797.7L909.0,798.5M910.0,796.9L910.6,800.0M911.0,769.7L911.8,770.2M913.0,774.5L913.8,775.0M914.7,793.5L915.2,797.7M916.3,795.7L916.8,791.7M917.8,803.6L918.4,797.5M919.4,799.2L919.4,749.9M921.0,798.8L921.5,797.0M922.5,794.0L923.0,796.0M924.1,797.3L924.6,798.1M925.6,791.2L926.2,799.3M927.2,784.7L927.2,767.6M928.8,796.8L929.3,797.0M930.3,798.6L930.4,759.3M931.4,737.2L932.1,737.7M933.4,798.5L934.0,794.5M935.0,802.9L935.5,798.1M936.6,798.8L937.1,785.6M938.1,795.2L938.6,799.0M939.6,783.0L940.2,797.5M941.2,796.3L941.8,801.4M942.8,796.4L943.3,794.4M944.4,799.4L944.9,793.3M945.9,784.6L946.4,800.1M947.5,793.1L948.0,792.7M948.6,755.2L949.4,755.7M950.5,775.0L951.1,785.5M952.2,800.5L952.7,802.7M953.7,797.9L954.2,799.7M955.3,801.6L955.8,799.5M956.8,799.2L957.4,796.6M958.2,769.7L959.0,770.2M960.0,779.2L959.9,777.2M961.5,793.5L962.0,782.2M963.1,794.3L963.6,801.1M964.6,799.3L965.2,796.1M966.2,797.9L966.7,797.6M967.5,753.1L968.2,753.6M969.3,786.9L969.8,801.4M971.0,784.4L971.4,797.4M972.4,791.0L973.0,792.0M974.0,798.3L974.5,801.9M975.6,795.1L976.1,797.4M977.1,796.2L977.6,800.7M978.7,792.4L979.2,805.0M980.2,801.7L980.8,798.9M981.8,775.0L982.3,798.2M983.0,760.0L983.8,760.5M984.9,792.5L985.1,778.0M986.5,796.5L987.0,795.6M988.0,796.8L988.6,796.7M989.6,803.8L990.1,796.3M990.6,769.2L991.4,769.7M992.7,800.3L993.2,796.2M994.1,779.8L994.8,799.6M995.8,791.7L996.4,799.9M997.4,802.6L997.9,799.0M998.6,759.1L999.5,797.4M1000.5,788.0L1001.0,793.3M1001.8,779.3L1002.5,779.8M1003.6,799.9L1004.2,801.5M1005.2,799.8L1005.7,798.8M1006.8,800.1L1007.3,797.3M1008.3,798.7L1008.8,797.0M1009.9,797.4L1010.4,801.3M1011.4,798.9L1012.0,795.2"/><path d="M260.0,808.0L260.6,803.5M261.6,808.9L262.1,809.7M263.2,806.5L263.7,799.3M264.7,809.7L265.2,809.1M266.3,803.1L266.8,810.6M267.6,784.2L268.4,806.6M269.4,808.6L269.9,811.5M271.0,806.6L271.2,799.7M272.5,811.8L273.0,809.3M274.1,807.1L274.6,806.3M275.6,797.9L276.2,809.1M277.2,808.3L277.7,808.3M278.4,793.8L279.3,809.0M279.8,795.1L280.6,795.6M281.9,809.7L282.4,807.1M283.4,804.7L284.0,808.7M285.0,808.5L285.5,808.7M286.6,806.2L287.1,797.5M288.1,811.4L288.6,805.6M289.7,810.5L290.2,806.6M291.2,802.0L291.8,809.8M292.8,809.9L293.3,811.7M294.4,807.5L294.9,808.6M295.9,804.1L296.4,807.2M297.5,813.0L298.0,807.9M298.8,793.8L299.6,808.9M300.6,813.0L301.1,808.1M302.2,806.9L302.7,809.1M303.7,806.5L304.2,803.2M305.3,808.1L305.8,808.8M306.9,785.5L307.4,806.0M308.4,807.7L308.9,809.4M310.0,809.2L310.5,806.7M311.5,810.1L312.0,809.3M313.1,809.1L313.6,807.5M314.6,806.9L315.0,774.2M316.2,811.0L316.7,807.8M317.6,785.2L318.4,785.7M319.3,810.6L319.8,807.6M320.9,807.5L321.4,800.4M322.4,813.0L323.0,808.9M324.0,806.0L324.5,805.1M325.6,808.9L325.6,798.4M327.1,807.4L327.6,806.8M328.4,799.0L329.2,799.5M329.8,799.0L330.6,799.5M331.8,806.3L332.0,798.0M333.4,804.4L333.9,808.8M334.9,811.0L335.1,799.7M336.5,810.5L337.0,808.9M338.0,811.4L338.6,811.3M339.6,811.3L340.1,816.5M341.2,802.5L341.7,809.1M342.7,808.2L343.2,805.6M344.3,796.6L344.8,802.4M345.8,805.3L346.4,798.7M347.4,801.3L347.9,805.3M349.0,804.9L349.5,803.2M350.5,801.4L351.0,806.4M352.1,797.2L352.6,801.2M353.6,805.9L354.2,805.2M355.2,800.6L355.7,804.6M356.3,786.9L357.1,787.4M358.3,804.1L358.8,806.3M359.9,802.2L360.4,804.2M361.4,804.6L361.5,786.9M363.0,796.5L363.5,804.6M364.1,782.2L364.9,782.7M366.1,802.9L366.6,805.6M367.7,799.6L368.2,799.6M369.2,781.2L369.8,802.1M370.8,800.0L371.3,800.0M372.2,795.6L372.9,800.0M373.9,801.1L374.4,806.2M375.5,800.3L376.0,792.5M377.0,800.0L377.3,790.5M378.6,802.5L379.1,801.2M380.2,802.8L380.7,803.1M381.7,802.7L382.2,806.6M383.0,792.5L383.8,801.6M384.8,800.3L385.4,803.4M386.4,803.1L386.3,796.7M388.0,804.2L388.5,808.2M389.5,805.0L390.0,804.0M391.1,803.4L391.6,804.7M392.6,803.0L393.0,788.4M394.2,803.5L394.7,801.9M395.8,801.8L396.3,806.0M397.3,802.8L397.8,803.7M398.8,796.7L399.5,797.2M400.4,806.1L401.0,800.2M402.0,794.5L402.5,799.3M403.6,808.0L404.1,804.6M405.1,804.6L405.6,802.8M406.7,801.9L407.2,803.9M408.2,801.6L408.8,805.6M409.8,804.8L410.3,804.2M411.4,806.1L411.9,801.1M412.9,802.7L413.4,803.8M414.5,805.1L415.0,803.5M416.0,797.8L416.6,805.0M417.6,803.2L417.5,785.3M419.2,805.2L419.7,799.2M420.7,804.0L421.2,806.6M422.2,792.5L422.8,804.0M423.8,801.6L424.4,803.2M425.1,786.9L425.9,787.4M427.0,806.3L427.5,806.5M428.5,803.4L429.0,805.0M430.1,803.7L430.6,801.7M431.6,803.4L432.2,803.9M433.2,801.9L433.7,801.8M434.8,804.0L435.3,801.8M436.3,808.8L436.8,803.8M437.9,804.8L438.4,805.2M439.4,804.0L440.0,806.2M440.8,783.8L441.6,784.3M442.6,804.1L443.1,798.1M444.1,804.6L444.6,803.1M445.7,806.8L446.2,805.9M446.8,793.6L447.6,794.1M448.8,791.3L449.3,803.3M450.4,802.7L450.9,809.2M451.9,792.5L452.4,806.3M453.5,797.8L454.0,804.4M455.0,805.9L455.6,805.2M456.4,790.3L457.2,790.8M458.2,806.6L458.7,796.1M459.7,808.2L460.2,802.9M461.3,804.0L461.8,801.9M462.8,801.7L463.4,800.1M464.5,787.4L464.9,800.9M466.0,803.5L466.5,804.8M467.5,805.5L468.0,804.0M469.1,805.6L469.6,805.1M470.6,798.6L471.2,806.5M472.2,805.2L472.7,801.6M473.8,803.1L474.3,803.9M475.3,803.4L475.8,806.6M476.6,786.9L477.4,787.4M478.4,804.5L479.0,803.9M480.0,802.7L480.5,801.9M481.0,772.4L481.8,772.9M483.1,797.7L483.6,793.1M484.7,804.5L485.2,801.4M486.2,803.8L486.8,804.3M487.6,790.3L488.4,790.8M489.4,803.0L489.9,805.0M490.9,795.7L491.4,803.1M492.5,801.7L493.0,803.9M494.0,804.2L494.6,802.2M495.6,803.2L496.1,795.2M497.2,800.0L497.7,804.5M498.7,802.1L499.2,800.5M500.3,806.7L500.8,804.0M501.8,799.5L502.4,802.4M503.4,805.6L503.9,796.8M505.0,805.3L505.5,806.1M506.1,788.3L506.9,788.8M508.1,802.1L508.6,808.4M509.6,797.1L510.2,803.1M511.2,807.6L511.7,805.2M512.8,803.3L513.3,801.8M514.3,808.1L514.8,798.2M515.9,800.5L516.4,807.1M516.9,791.7L517.6,792.2M519.0,801.6L519.2,786.9M520.6,806.9L521.1,799.3M522.1,799.3L522.4,748.3M523.7,804.6L524.2,801.0M525.2,805.2L525.8,804.8M526.8,802.7L527.3,807.1M528.4,806.2L528.9,805.4M529.9,804.5L530.4,801.5M531.5,803.3L532.0,794.5M533.0,797.0L533.6,804.7M534.6,800.2L534.9,788.3M536.2,805.3L536.7,803.4M537.8,783.9L538.2,804.3M539.3,804.5L539.8,802.0M540.4,793.8L541.1,794.3M542.4,806.8L542.9,803.8M544.0,803.3L544.5,798.0M545.1,728.1L546.0,801.1M546.9,772.4L547.6,772.9M548.6,804.9L549.2,794.0M550.2,794.3L550.7,803.7M551.8,803.9L552.3,794.5M553.1,790.8L553.8,789.7M554.9,797.4L555.4,805.9M556.4,798.4L557.0,802.1M557.5,775.9L558.2,776.4M559.6,806.2L560.1,802.9M561.1,803.9L561.6,801.4M562.7,804.0L562.8,777.2M564.2,803.3L564.8,806.0M565.8,804.3L566.3,805.7M567.4,808.7L567.9,794.2M568.9,801.8L568.9,780.0M570.4,779.3L571.1,779.8M572.0,800.7L572.6,802.9M573.6,803.6L574.1,801.6M575.1,781.2L575.7,800.0M576.7,804.2L577.2,798.1M578.3,801.5L578.8,806.0M579.8,804.0L580.4,803.7M581.4,802.4L581.6,772.4M583.0,802.0L583.5,798.9M584.5,804.6L585.0,802.8M586.1,802.3L586.6,800.4M587.6,799.5L588.2,803.5M589.0,771.5L589.7,800.7M590.8,800.2L591.3,796.3M592.3,798.5L592.8,799.7M593.9,799.5L594.4,797.2M595.4,799.6L596.0,804.6M597.0,796.8L597.5,800.8M598.6,799.0L599.1,799.4M599.9,786.9L600.6,787.4M601.7,801.4L602.2,803.9M603.1,775.9L603.9,776.4M604.8,800.4L605.0,753.1M606.4,802.6L606.9,798.3M607.9,807.2L608.4,803.0M609.4,767.6L610.1,768.1M611.0,799.7L611.6,791.0M612.6,801.1L613.1,803.0M614.2,798.4L614.7,801.5M615.7,801.2L616.2,799.7M617.3,800.9L617.8,800.8M618.8,801.1L619.4,798.7M620.4,799.4L620.9,801.4M622.0,801.5L622.5,799.3M623.5,798.1L624.0,800.4M624.5,772.4L625.2,772.9M626.6,790.7L626.6,780.7M628.2,798.7L628.7,793.9M629.8,799.9L630.3,802.1M631.0,782.0L631.8,782.5M632.9,804.0L633.4,796.2M634.4,797.5L635.0,801.4M636.0,797.9L636.5,793.7M637.6,799.0L638.1,801.7M639.1,796.8L639.6,799.1M640.7,802.6L641.2,798.3M641.8,779.3L642.5,779.8M643.8,789.7L644.3,787.4M645.4,797.9L645.9,800.2M646.9,797.7L647.4,800.4M648.5,793.7L649.0,800.5M650.0,801.6L650.6,799.6M651.6,787.3L652.1,795.5M653.2,789.1L653.7,799.2M654.7,792.9L655.2,799.7M656.1,777.7L656.8,800.7M657.8,798.3L658.4,799.4M659.4,800.7L659.9,785.6M660.6,755.2L661.4,755.7M662.4,761.9L663.0,796.2M663.9,785.5L664.6,786.0M665.6,799.7L666.2,796.8M667.2,782.8L667.6,783.3M668.8,801.9L668.9,744.8M670.3,799.9L670.8,802.7M671.9,796.8L672.4,797.7M673.4,783.1L673.8,760.0M675.0,798.7L675.5,801.6M676.6,800.1L676.9,762.8M678.1,798.7L678.6,801.4M679.6,779.8L680.2,799.9M681.2,791.5L681.8,799.9M682.8,799.1L683.3,800.0M684.4,798.9L684.9,798.4M685.4,769.7L686.1,770.2M687.5,793.6L688.0,792.9M688.6,786.2L689.4,786.7M690.6,802.5L691.1,802.2M692.2,793.7L692.7,796.9M693.5,783.3L694.2,798.8M695.3,781.9L695.8,797.3M696.5,768.1L697.4,792.7M697.9,756.6L698.6,757.1M700.0,797.3L700.5,798.4M701.5,803.3L702.0,784.5M702.9,770.2L703.6,796.2M704.6,785.9L705.2,796.8M705.9,714.5L706.6,715.0M707.8,799.2L708.3,798.9M709.3,797.2L709.8,796.6M710.6,765.3L711.4,795.7M712.4,801.4L712.6,755.2M714.0,794.3L714.5,790.1M715.6,792.3L715.5,779.3M717.1,796.4L717.6,784.7M718.5,774.5L719.2,775.0M720.2,799.8L720.8,800.3M721.8,793.2L722.3,784.5M723.1,786.0L723.9,800.6M724.9,800.4L725.4,800.3M726.1,771.0L726.9,771.5M728.0,794.9L728.2,753.1M729.6,799.1L730.1,798.7M731.2,795.2L731.7,795.9M732.8,753.6L733.2,794.9M734.3,799.6L734.8,789.1M735.6,766.7L736.2,732.4M737.4,793.2L737.9,800.9M739.0,799.6L738.9,755.2M740.4,726.2L741.1,726.7M742.1,799.9L742.6,796.7M743.6,798.7L744.2,797.7M745.2,796.2L745.7,797.9M746.5,760.0L747.2,760.5M748.3,796.2L748.4,777.9M749.9,799.7L750.4,799.5M751.4,794.5L751.8,755.2M753.0,797.4L753.5,798.3M754.6,782.9L755.1,794.5M756.1,796.7L756.6,798.9M757.7,799.3L757.9,762.8M759.2,799.2L759.8,792.3M760.8,795.5L761.3,797.2M762.1,714.5L762.9,715.0M763.9,794.4L764.4,793.5M765.1,756.6L765.9,757.1M767.0,800.5L767.2,766.2M768.6,798.1L769.1,792.6M770.2,797.9L770.7,794.9M771.4,766.7L772.2,792.8M773.3,798.9L773.4,758.6M774.8,791.0L775.4,792.1M776.4,797.1L776.9,800.5M778.0,794.3L778.5,796.7M778.9,782.0L779.6,782.5M781.1,794.2L781.6,795.9M782.5,774.8L783.2,795.4M784.2,801.3L784.7,781.7M785.8,793.0L786.3,795.8M787.3,784.0L787.4,753.6M788.9,793.9L789.4,797.5M790.1,776.5L791.0,784.5M792.0,796.4L792.5,800.0M793.2,777.8L794.0,778.3M795.1,790.0L795.6,797.3M796.7,783.0L797.2,798.6M798.2,784.4L798.4,774.3M799.8,797.0L800.3,797.7M801.4,801.5L801.9,792.3M802.9,797.1L803.4,799.3M804.5,801.4L805.0,797.1M806.0,785.8L806.6,799.9M807.6,797.5L807.9,776.0M809.2,800.3L809.7,785.3M810.7,788.7L811.2,790.9M812.3,777.4L812.8,801.1M813.8,799.5L814.1,779.5M815.4,795.8L815.9,785.8M817.0,796.5L817.5,795.4M818.5,798.2L819.0,797.7M820.1,796.1L820.6,787.3M821.0,776.0L821.8,776.5M823.2,794.8L823.7,786.1M824.8,795.6L825.1,735.5M826.3,801.5L826.8,797.5M827.9,790.9L828.4,788.7M829.4,797.4L830.0,798.9M831.0,796.9L831.5,799.5M832.6,797.0L833.1,801.3M834.1,785.1L834.6,799.6M835.7,798.8L835.6,761.4M837.2,800.2L837.8,795.5M838.8,795.2L839.3,778.6M840.4,797.6L840.9,795.3M841.9,786.5L842.4,795.7M842.9,681.2L843.6,681.7M845.0,798.8L845.6,798.0M846.6,798.2L846.8,773.1M848.2,795.5L848.7,798.4M849.7,796.7L850.2,798.5M851.3,798.3L851.8,781.5M852.8,800.2L853.4,798.8M854.4,788.2L854.9,802.2M856.0,800.1L856.5,795.7M857.0,764.8L857.8,765.3M859.1,798.3L859.6,796.4M860.6,795.0L861.2,795.0M862.2,797.0L862.7,797.7M863.8,793.7L864.1,766.2M865.3,790.8L865.8,798.7M866.9,784.7L867.4,801.4M868.2,783.8L869.0,784.3M870.0,798.0L870.5,791.7M871.6,790.0L872.1,796.2M872.8,772.6L873.5,773.1M874.7,800.2L874.9,767.9M876.2,794.5L876.8,796.4M877.8,784.0L877.9,772.6M879.4,795.8L879.9,781.4M880.9,800.5L881.4,789.6M882.0,743.8L882.8,744.3M884.0,789.8L884.4,782.0M885.6,780.0L886.1,796.8M887.2,799.8L887.7,802.1M888.7,800.0L888.6,782.0M889.9,782.5L890.6,783.0M891.8,782.1L892.4,794.9M893.5,777.7L893.9,798.6M895.0,785.8L895.0,772.4M896.5,797.0L897.0,798.6M897.9,771.0L898.6,771.5M899.6,796.2L900.2,798.0M901.0,785.2L901.8,786.0M902.8,798.6L903.3,797.5M904.3,798.8L904.8,791.5M905.9,788.3L906.4,796.9M907.2,774.5L908.0,775.0M909.0,798.5L909.5,797.6M910.6,800.0L911.1,791.6M911.8,770.2L912.6,792.7M913.8,775.0L914.2,801.1M915.2,797.7L915.8,793.6M916.8,791.7L917.3,794.3M918.4,797.5L918.9,795.0M919.4,749.9L920.1,750.4M921.5,797.0L922.0,794.6M923.0,796.0L923.6,799.6M924.6,798.1L925.1,796.9M926.2,799.3L926.7,797.1M927.2,767.6L928.0,768.1M929.3,797.0L929.8,786.4M930.4,759.3L931.1,759.8M932.1,737.7L932.9,788.3M934.0,794.5L934.5,797.7M935.5,798.1L936.0,800.6M937.1,785.6L937.6,784.7M938.6,799.0L938.9,782.5M940.2,797.5L940.7,801.3M941.8,801.4L942.3,797.3M943.3,794.4L943.8,798.3M944.9,793.3L945.1,784.1M946.4,800.1L947.0,796.6M948.0,792.7L948.5,798.1M949.4,755.7L949.8,774.5M951.1,785.5L951.6,783.4M952.7,802.7L953.2,795.2M954.2,799.7L954.8,799.0M955.8,799.5L956.3,783.5M957.4,796.6L957.9,797.6M959.0,770.2L959.4,801.0M959.9,777.2L960.6,777.7M962.0,782.2L962.6,783.6M963.6,801.1L964.1,799.9M965.2,796.1L965.7,793.8M966.7,797.6L967.2,781.3M968.2,753.6L968.8,788.3M969.8,801.4L970.2,783.9M971.4,797.4L971.9,799.6M973.0,792.0L973.5,796.0M974.5,801.9L975.0,798.7M976.1,797.4L976.6,798.0M977.6,800.7L978.2,798.1M979.2,805.0L979.7,798.5M980.8,798.9L981.0,774.5M982.3,798.2L982.8,796.9M983.8,760.5L984.4,798.7M985.1,778.0L985.9,778.5M987.0,795.6L987.5,798.3M988.6,796.7L989.1,798.3M990.1,796.3L990.6,783.4M991.4,769.7L992.2,799.0M993.2,796.2L993.4,779.3M994.8,799.6L995.3,799.9M996.4,799.9L996.9,787.7M997.9,799.0L997.9,758.6M999.5,797.4L1000.0,798.9M1001.0,793.3L1001.6,798.8M1002.5,779.8L1003.1,798.3M1004.2,801.5L1004.7,798.8M1005.7,798.8L1006.2,797.4M1007.3,797.3L1007.8,800.7M1008.8,797.0L1009.4,788.8M1010.4,801.3L1010.9,799.5M1012.0,795.2L1012.0,785.5"/></g>
</svg>

<div class="ax" style="left:325px;top:811.5px;color:rgba(255,255,255,0.09)">46ms</div>
<div class="t" style="left:297.4px;top:843.8px;font-size:15.2px;color:#fff;-webkit-text-stroke:0.2px #fff">Online since Wednesday 12:04AM, Jul 4 2018</div>
<div style="position:absolute;left:872.3px;top:840.3px;width:117px;height:24px;border-radius:3px;background:#74ad4f;border:1px solid #6ba346;color:#fff;font-size:11.9px;line-height:22px;text-align:center">View Service</div>

<!-- mask below window bottom -->
</body></html>
